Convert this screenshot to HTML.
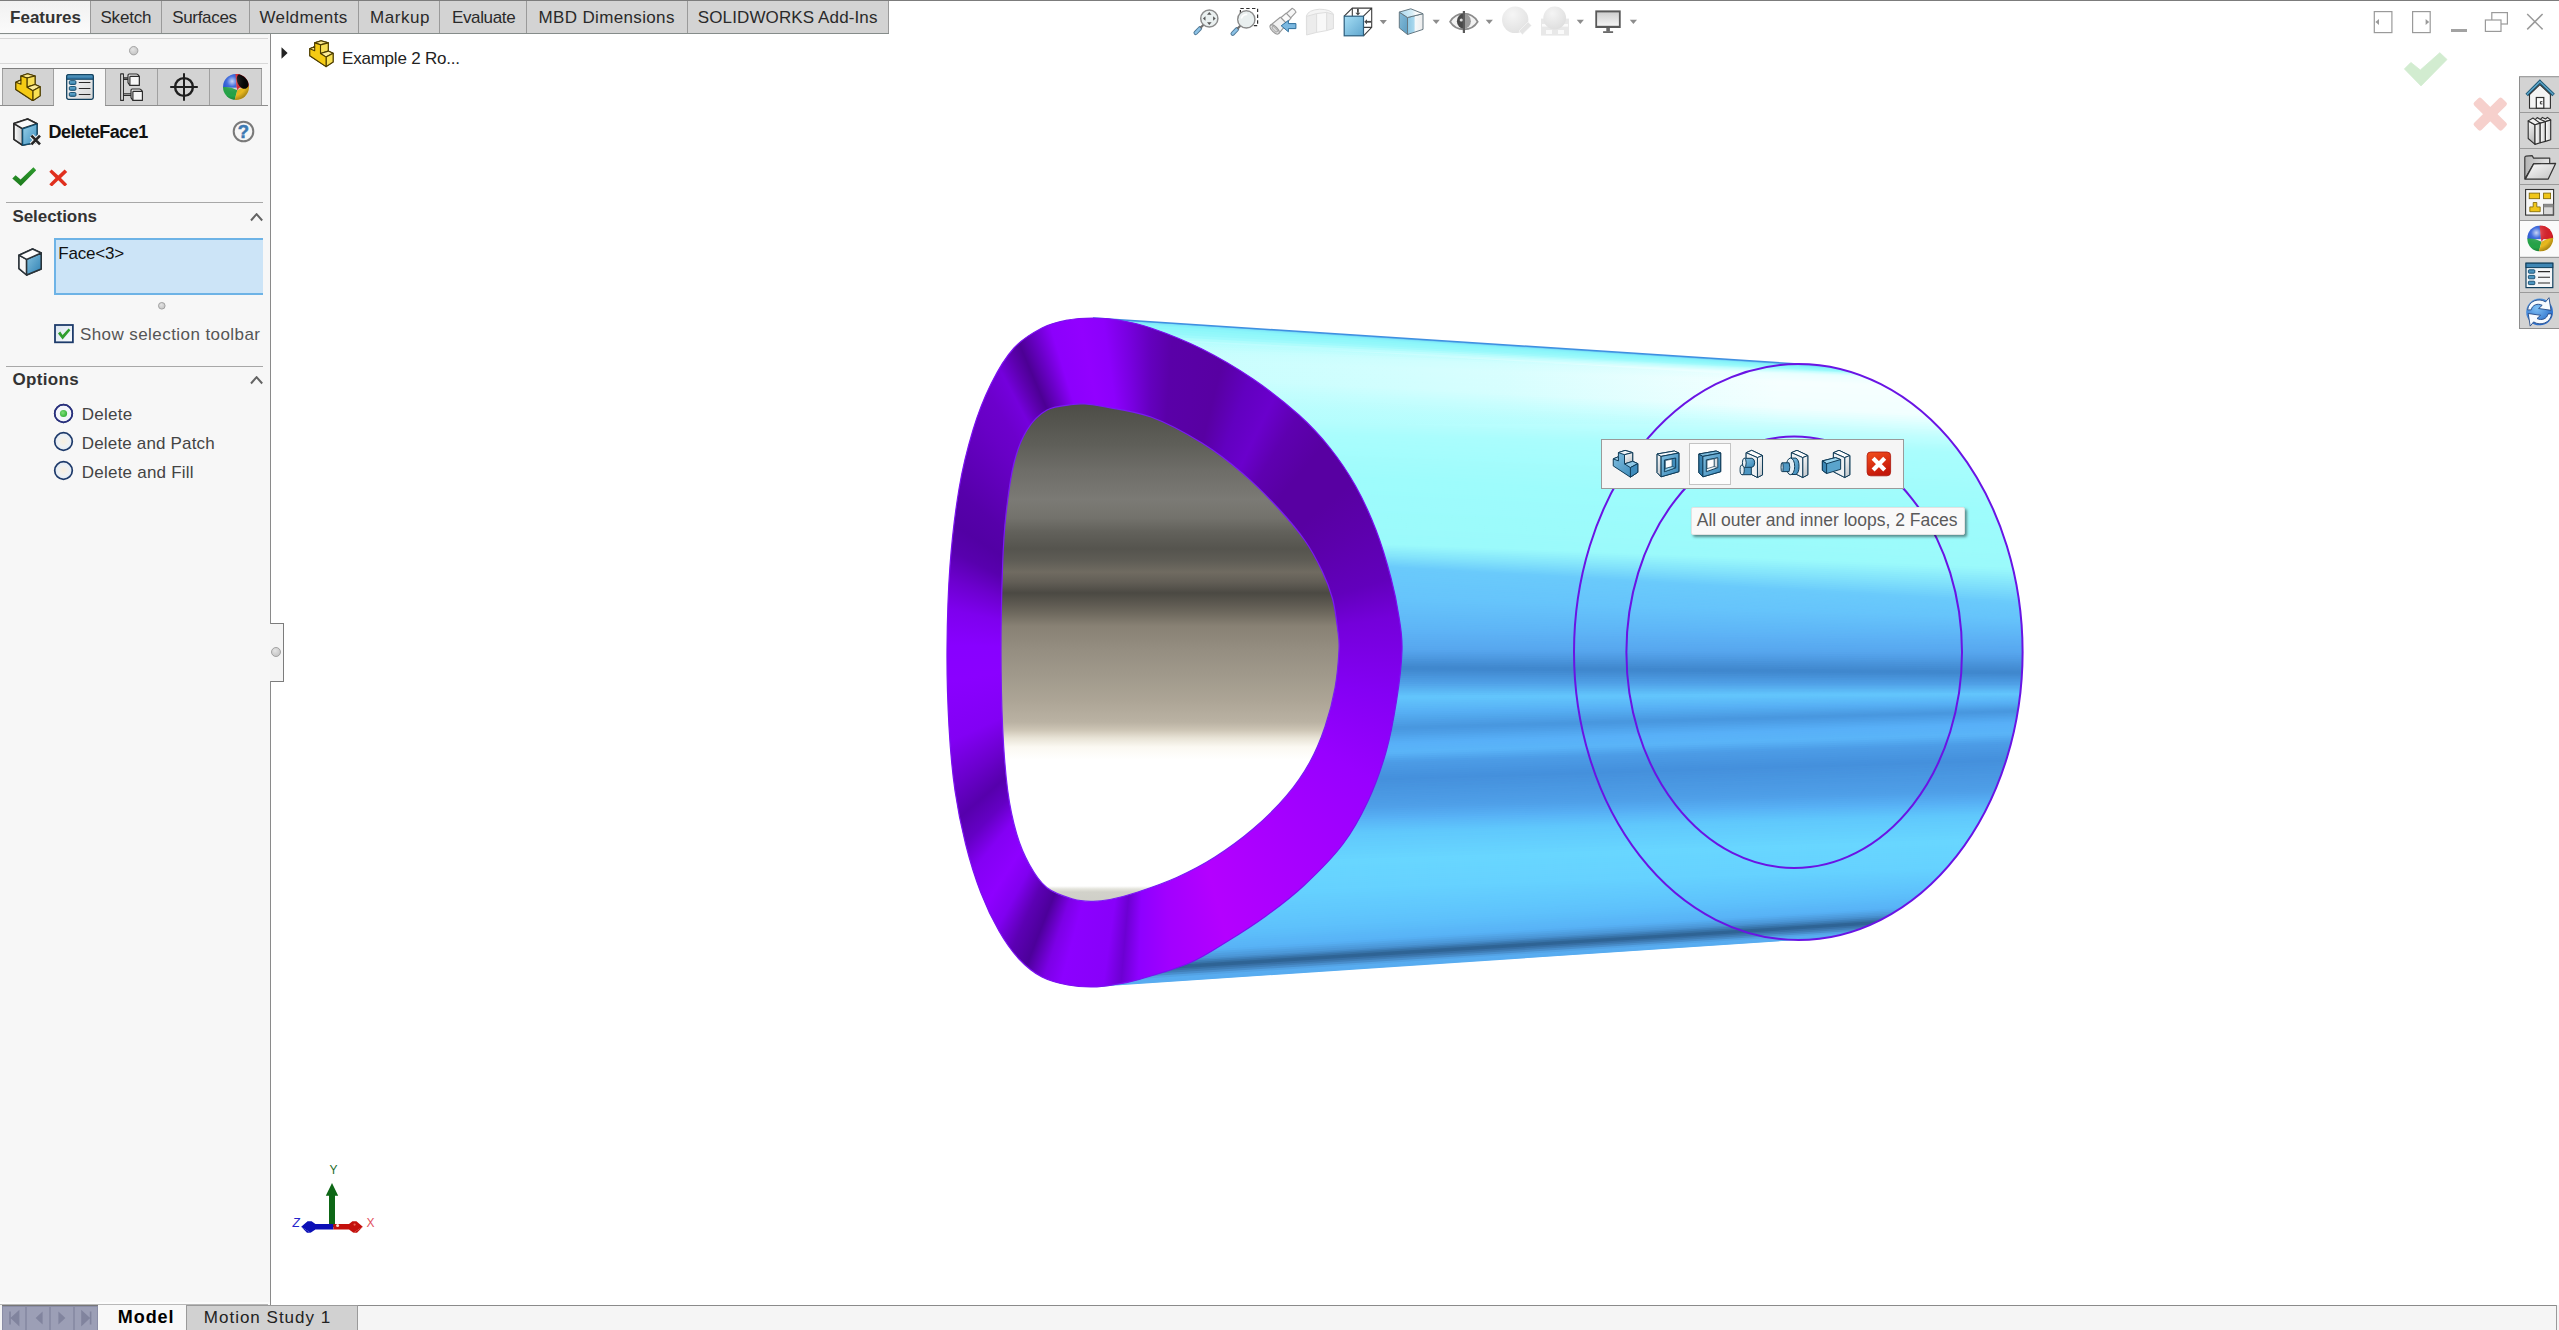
<!DOCTYPE html>
<html><head><meta charset="utf-8"><title>SOLIDWORKS - DeleteFace1</title>
<style>
html,body{margin:0;padding:0;}
body{width:2559px;height:1330px;overflow:hidden;background:#fff;position:relative;font-family:"Liberation Sans",sans-serif;}
.abs{position:absolute;}
.t{position:absolute;white-space:nowrap;line-height:1;font-family:"Liberation Sans",sans-serif;}
.b{position:absolute;box-sizing:border-box;}
</style></head><body>

<svg class="abs" width="2559" height="1330" viewBox="0 0 2559 1330" style="left:0;top:0"><defs><clipPath id="bc"><path d="M1093,318L1798.3,364A224.3,288.0 0 0 1 1798.3,940L1093,987Z"/></clipPath></defs><linearGradient id="hl" gradientUnits="userSpaceOnUse" x1="1093" y1="0" x2="1780" y2="0"><stop offset="0" stop-color="#b4fdfd" stop-opacity="0.75"/><stop offset="0.6" stop-color="#b4fdfd" stop-opacity="0.45"/><stop offset="1" stop-color="#b4fdfd" stop-opacity="0"/></linearGradient><g clip-path="url(#bc)"><path d="M1085,317.4L2030,379.1L2030,381.5L1085,319.8Z" fill="#6acbf4"/>
<path d="M1085,318.6L2030,380.3L2030,382.2L1085,321.2Z" fill="#82eaf8"/>
<path d="M1085,320.0L2030,381.0L2030,382.9L1085,322.6Z" fill="#87f2fa"/>
<path d="M1085,321.4L2030,381.7L2030,382.9L1085,325.4Z" fill="#8cf6fa"/>
<path d="M1085,324.2L2030,381.7L2030,382.9L1085,328.1Z" fill="#91f8fa"/>
<path d="M1085,326.9L2030,381.7L2030,382.8L1085,330.9Z" fill="#96f8fb"/>
<path d="M1085,329.7L2030,381.6L2030,382.8L1085,333.9Z" fill="#9ffafc"/>
<path d="M1085,332.7L2030,381.6L2030,382.6L1085,337.0Z" fill="#aefcfc"/>
<path d="M1085,335.8L2030,381.4L2030,382.6L1085,340.0Z" fill="#bdfdfe"/>
<path d="M1085,338.8L2030,381.4L2030,383.0L1085,342.8Z" fill="#cafefe"/>
<path d="M1085,341.6L2030,381.8L2030,383.4L1085,345.6Z" fill="#d7fefe"/>
<path d="M1085,344.4L2030,382.2L2030,383.8L1085,348.4Z" fill="#e4ffff"/>
<path d="M1085,347.2L2030,382.6L2030,385.3L1085,350.3Z" fill="#ebffff"/>
<path d="M1085,349.1L2030,384.1L2030,386.8L1085,352.3Z" fill="#eeffff"/>
<path d="M1085,351.1L2030,385.6L2030,388.3L1085,354.3Z" fill="#f0ffff"/>
<path d="M1085,353.1L2030,387.1L2030,389.8L1085,356.2Z" fill="#f2ffff"/>
<path d="M1085,355.0L2030,388.6L2030,391.2L1085,358.2Z" fill="#f5ffff"/>
<path d="M1085,357.0L2030,390.1L2030,393.5L1085,359.4Z" fill="#f6ffff"/>
<path d="M1085,358.2L2030,392.3L2030,395.8L1085,360.5Z" fill="#f6ffff"/>
<path d="M1085,359.3L2030,394.6L2030,398.0L1085,361.7Z" fill="#f5ffff"/>
<path d="M1085,360.5L2030,396.8L2030,400.3L1085,362.9Z" fill="#f5ffff"/>
<path d="M1085,361.7L2030,399.1L2030,402.6L1085,364.0Z" fill="#f5ffff"/>
<path d="M1085,362.8L2030,401.4L2030,404.8L1085,365.2Z" fill="#f4ffff"/>
<path d="M1085,364.0L2030,403.6L2030,407.1L1085,366.4Z" fill="#f4ffff"/>
<path d="M1085,365.2L2030,405.9L2030,409.4L1085,367.6Z" fill="#f4ffff"/>
<path d="M1085,366.4L2030,408.2L2030,411.6L1085,368.8Z" fill="#f3ffff"/>
<path d="M1085,367.6L2030,410.4L2030,413.9L1085,369.9Z" fill="#f3ffff"/>
<path d="M1085,368.7L2030,412.7L2030,416.2L1085,371.1Z" fill="#f3ffff"/>
<path d="M1085,369.9L2030,415.0L2030,418.4L1085,372.3Z" fill="#f2ffff"/>
<path d="M1085,371.1L2030,417.2L2030,420.7L1085,373.4Z" fill="#f2ffff"/>
<path d="M1085,372.2L2030,419.5L2030,422.7L1085,375.4Z" fill="#f0ffff"/>
<path d="M1085,374.2L2030,421.5L2030,424.7L1085,377.4Z" fill="#ebffff"/>
<path d="M1085,376.2L2030,423.5L2030,426.7L1085,379.4Z" fill="#e7ffff"/>
<path d="M1085,378.2L2030,425.5L2030,428.7L1085,381.4Z" fill="#e3ffff"/>
<path d="M1085,380.2L2030,427.5L2030,430.7L1085,383.4Z" fill="#deffff"/>
<path d="M1085,382.2L2030,429.5L2030,432.2L1085,385.7Z" fill="#daffff"/>
<path d="M1085,384.5L2030,431.1L2030,433.8L1085,387.9Z" fill="#d6ffff"/>
<path d="M1085,386.7L2030,432.6L2030,435.4L1085,390.1Z" fill="#d3ffff"/>
<path d="M1085,388.9L2030,434.2L2030,436.9L1085,392.4Z" fill="#cffefe"/>
<path d="M1085,391.2L2030,435.7L2030,438.4L1085,394.6Z" fill="#cbfefe"/>
<path d="M1085,393.4L2030,437.2L2030,440.0L1085,396.8Z" fill="#c8fefe"/>
<path d="M1085,395.6L2030,438.8L2030,441.6L1085,399.0Z" fill="#c4fefe"/>
<path d="M1085,397.8L2030,440.4L2030,442.8L1085,401.4Z" fill="#c1fefe"/>
<path d="M1085,400.2L2030,441.6L2030,444.0L1085,403.8Z" fill="#bffefe"/>
<path d="M1085,402.6L2030,442.8L2030,445.2L1085,406.2Z" fill="#bdfefe"/>
<path d="M1085,405.0L2030,444.0L2030,446.4L1085,408.6Z" fill="#bbfefe"/>
<path d="M1085,407.4L2030,445.2L2030,447.6L1085,411.0Z" fill="#b9fefe"/>
<path d="M1085,409.8L2030,446.4L2030,448.8L1085,413.4Z" fill="#b7fefe"/>
<path d="M1085,412.2L2030,447.6L2030,450.0L1085,415.8Z" fill="#b5fdfd"/>
<path d="M1085,414.6L2030,448.8L2030,451.2L1085,418.2Z" fill="#b3fdfd"/>
<path d="M1085,417.0L2030,450.1L2030,452.5L1085,420.6Z" fill="#b1fdfd"/>
<path d="M1085,419.4L2030,451.3L2030,453.7L1085,423.0Z" fill="#affdfd"/>
<path d="M1085,421.8L2030,452.5L2030,454.9L1085,425.4Z" fill="#adfdfd"/>
<path d="M1085,424.2L2030,453.7L2030,456.1L1085,427.8Z" fill="#abfdfd"/>
<path d="M1085,426.6L2030,454.9L2030,458.3L1085,429.2Z" fill="#aafdfd"/>
<path d="M1085,428.0L2030,457.1L2030,460.5L1085,430.6Z" fill="#a9fdfd"/>
<path d="M1085,429.4L2030,459.3L2030,462.6L1085,432.1Z" fill="#a9fdfd"/>
<path d="M1085,430.9L2030,461.4L2030,464.8L1085,433.6Z" fill="#a8fdfd"/>
<path d="M1085,432.4L2030,463.6L2030,467.0L1085,435.0Z" fill="#a8fdfd"/>
<path d="M1085,433.8L2030,465.8L2030,469.2L1085,436.4Z" fill="#a7fdfd"/>
<path d="M1085,435.2L2030,468.0L2030,471.3L1085,437.9Z" fill="#a7fdfd"/>
<path d="M1085,436.7L2030,470.1L2030,473.5L1085,439.4Z" fill="#a7fdfd"/>
<path d="M1085,438.2L2030,472.3L2030,475.7L1085,440.8Z" fill="#a6fdfd"/>
<path d="M1085,439.6L2030,474.5L2030,477.9L1085,442.2Z" fill="#a6fdfd"/>
<path d="M1085,441.0L2030,476.7L2030,480.0L1085,443.7Z" fill="#a5fdfd"/>
<path d="M1085,442.5L2030,478.8L2030,482.2L1085,445.2Z" fill="#a5fdfd"/>
<path d="M1085,444.0L2030,481.0L2030,484.4L1085,446.6Z" fill="#a4fdfd"/>
<path d="M1085,445.4L2030,483.2L2030,486.6L1085,448.0Z" fill="#a4fcfc"/>
<path d="M1085,446.8L2030,485.4L2030,488.8L1085,449.5Z" fill="#a3fcfc"/>
<path d="M1085,448.3L2030,487.6L2030,490.9L1085,451.0Z" fill="#a3fcfc"/>
<path d="M1085,449.8L2030,489.7L2030,493.1L1085,452.4Z" fill="#a2fcfc"/>
<path d="M1085,451.2L2030,491.9L2030,495.3L1085,453.8Z" fill="#a2fcfc"/>
<path d="M1085,452.6L2030,494.1L2030,497.5L1085,455.3Z" fill="#a1fcfc"/>
<path d="M1085,454.1L2030,496.3L2030,499.6L1085,456.8Z" fill="#a1fcfc"/>
<path d="M1085,455.6L2030,498.4L2030,501.8L1085,458.2Z" fill="#a1fcfc"/>
<path d="M1085,457.0L2030,500.6L2030,504.0L1085,459.6Z" fill="#a0fcfc"/>
<path d="M1085,458.4L2030,502.8L2030,506.2L1085,461.1Z" fill="#a0fcfc"/>
<path d="M1085,459.9L2030,505.0L2030,508.3L1085,462.6Z" fill="#9ffcfc"/>
<path d="M1085,461.4L2030,507.1L2030,510.5L1085,464.0Z" fill="#9ffcfc"/>
<path d="M1085,462.8L2030,509.3L2030,512.7L1085,465.4Z" fill="#9efcfc"/>
<path d="M1085,464.2L2030,511.5L2030,514.4L1085,467.5Z" fill="#9efcfc"/>
<path d="M1085,466.3L2030,513.2L2030,516.2L1085,469.6Z" fill="#9efcfc"/>
<path d="M1085,468.4L2030,515.0L2030,517.9L1085,471.7Z" fill="#9efcfc"/>
<path d="M1085,470.5L2030,516.7L2030,519.6L1085,473.8Z" fill="#9efcfc"/>
<path d="M1085,472.6L2030,518.4L2030,521.4L1085,475.9Z" fill="#9efcfc"/>
<path d="M1085,474.7L2030,520.2L2030,523.1L1085,478.0Z" fill="#9efcfc"/>
<path d="M1085,476.8L2030,521.9L2030,524.8L1085,480.1Z" fill="#9dfcfc"/>
<path d="M1085,478.9L2030,523.6L2030,526.5L1085,482.2Z" fill="#9dfcfc"/>
<path d="M1085,481.0L2030,525.3L2030,528.3L1085,484.3Z" fill="#9dfbfc"/>
<path d="M1085,483.1L2030,527.1L2030,530.0L1085,486.3Z" fill="#9dfbfc"/>
<path d="M1085,485.1L2030,528.8L2030,531.7L1085,488.4Z" fill="#9dfbfc"/>
<path d="M1085,487.2L2030,530.5L2030,533.5L1085,490.5Z" fill="#9dfbfc"/>
<path d="M1085,489.3L2030,532.3L2030,535.2L1085,492.6Z" fill="#9dfbfc"/>
<path d="M1085,491.4L2030,534.0L2030,536.9L1085,494.7Z" fill="#9dfbfc"/>
<path d="M1085,493.5L2030,535.7L2030,538.7L1085,496.8Z" fill="#9dfbfc"/>
<path d="M1085,495.6L2030,537.5L2030,540.4L1085,498.9Z" fill="#9dfbfc"/>
<path d="M1085,497.7L2030,539.2L2030,542.1L1085,501.0Z" fill="#9cfbfc"/>
<path d="M1085,499.8L2030,540.9L2030,543.9L1085,503.1Z" fill="#9cfbfb"/>
<path d="M1085,501.9L2030,542.7L2030,545.6L1085,505.1Z" fill="#9cfbfb"/>
<path d="M1085,503.9L2030,544.4L2030,547.3L1085,507.2Z" fill="#9cfbfb"/>
<path d="M1085,506.0L2030,546.1L2030,549.1L1085,509.3Z" fill="#9cfbfb"/>
<path d="M1085,508.1L2030,547.9L2030,550.8L1085,511.4Z" fill="#9cfbfb"/>
<path d="M1085,510.2L2030,549.6L2030,552.5L1085,513.5Z" fill="#9cfbfb"/>
<path d="M1085,512.3L2030,551.3L2030,554.2L1085,515.6Z" fill="#9cfbfb"/>
<path d="M1085,514.4L2030,553.0L2030,556.0L1085,517.7Z" fill="#9cfbfb"/>
<path d="M1085,516.5L2030,554.8L2030,557.7L1085,519.8Z" fill="#9cfafb"/>
<path d="M1085,518.6L2030,556.5L2030,559.4L1085,521.9Z" fill="#9cfafb"/>
<path d="M1085,520.7L2030,558.2L2030,561.2L1085,523.9Z" fill="#9cfafb"/>
<path d="M1085,522.7L2030,560.0L2030,562.9L1085,526.0Z" fill="#9bfafb"/>
<path d="M1085,524.8L2030,561.7L2030,564.6L1085,528.1Z" fill="#9bfafb"/>
<path d="M1085,526.9L2030,563.4L2030,566.4L1085,530.2Z" fill="#9bfafb"/>
<path d="M1085,529.0L2030,565.2L2030,568.1L1085,532.3Z" fill="#9bfafb"/>
<path d="M1085,531.1L2030,566.9L2030,569.8L1085,534.4Z" fill="#9bfafb"/>
<path d="M1085,533.2L2030,568.6L2030,572.1L1085,535.6Z" fill="#99f8fb"/>
<path d="M1085,534.4L2030,570.9L2030,574.3L1085,536.9Z" fill="#96f5fb"/>
<path d="M1085,535.7L2030,573.1L2030,576.6L1085,538.1Z" fill="#93f2fb"/>
<path d="M1085,536.9L2030,575.4L2030,578.8L1085,539.3Z" fill="#90effb"/>
<path d="M1085,538.1L2030,577.6L2030,581.1L1085,540.6Z" fill="#8cecfb"/>
<path d="M1085,539.4L2030,579.9L2030,583.3L1085,541.8Z" fill="#89e9fb"/>
<path d="M1085,540.6L2030,582.1L2030,585.6L1085,543.0Z" fill="#86e6fb"/>
<path d="M1085,541.8L2030,584.4L2030,587.8L1085,543.9Z" fill="#83e3fb"/>
<path d="M1085,542.7L2030,586.6L2030,590.0L1085,544.8Z" fill="#80e0fb"/>
<path d="M1085,543.6L2030,588.8L2030,592.2L1085,545.7Z" fill="#7dddfb"/>
<path d="M1085,544.5L2030,591.0L2030,594.4L1085,546.6Z" fill="#7adafb"/>
<path d="M1085,545.4L2030,593.2L2030,596.6L1085,547.5Z" fill="#77d7fb"/>
<path d="M1085,546.3L2030,595.4L2030,598.8L1085,548.4Z" fill="#74d4fb"/>
<path d="M1085,547.2L2030,597.6L2030,601.0L1085,549.3Z" fill="#71d1fb"/>
<path d="M1085,548.1L2030,599.8L2030,603.2L1085,550.2Z" fill="#6ecefb"/>
<path d="M1085,549.0L2030,602.0L2030,605.4L1085,551.1Z" fill="#6bcbfb"/>
<path d="M1085,549.9L2030,604.2L2030,606.3L1085,553.6Z" fill="#6acafb"/>
<path d="M1085,552.4L2030,605.1L2030,607.3L1085,556.2Z" fill="#6ac9fb"/>
<path d="M1085,555.0L2030,606.1L2030,608.2L1085,558.7Z" fill="#69c9fb"/>
<path d="M1085,557.5L2030,607.0L2030,609.1L1085,561.3Z" fill="#69c9fb"/>
<path d="M1085,560.1L2030,607.9L2030,610.0L1085,563.8Z" fill="#69c8fb"/>
<path d="M1085,562.6L2030,608.8L2030,610.9L1085,566.3Z" fill="#69c8fb"/>
<path d="M1085,565.1L2030,609.7L2030,611.8L1085,568.9Z" fill="#68c8fb"/>
<path d="M1085,567.7L2030,610.6L2030,612.8L1085,571.4Z" fill="#68c7fb"/>
<path d="M1085,570.2L2030,611.6L2030,613.7L1085,574.0Z" fill="#68c7fb"/>
<path d="M1085,572.8L2030,612.5L2030,614.6L1085,576.5Z" fill="#68c6fb"/>
<path d="M1085,575.3L2030,613.4L2030,615.5L1085,579.0Z" fill="#67c6fb"/>
<path d="M1085,577.8L2030,614.3L2030,616.4L1085,581.6Z" fill="#67c6fb"/>
<path d="M1085,580.4L2030,615.2L2030,617.3L1085,584.1Z" fill="#67c5fb"/>
<path d="M1085,582.9L2030,616.1L2030,618.3L1085,586.7Z" fill="#67c5fb"/>
<path d="M1085,585.5L2030,617.1L2030,619.2L1085,589.2Z" fill="#66c5fb"/>
<path d="M1085,588.0L2030,618.0L2030,620.1L1085,591.8Z" fill="#66c4fb"/>
<path d="M1085,590.5L2030,618.9L2030,621.3L1085,594.2Z" fill="#66c3fb"/>
<path d="M1085,593.0L2030,620.1L2030,622.4L1085,596.6Z" fill="#65c2fa"/>
<path d="M1085,595.4L2030,621.2L2030,623.6L1085,599.0Z" fill="#65c1fa"/>
<path d="M1085,597.8L2030,622.4L2030,624.7L1085,601.4Z" fill="#64c0fa"/>
<path d="M1085,600.2L2030,623.5L2030,625.9L1085,603.9Z" fill="#64bffa"/>
<path d="M1085,602.6L2030,624.7L2030,627.1L1085,606.3Z" fill="#63bef9"/>
<path d="M1085,605.1L2030,625.9L2030,628.2L1085,608.7Z" fill="#63bdf9"/>
<path d="M1085,607.5L2030,627.0L2030,629.4L1085,611.1Z" fill="#62bcf8"/>
<path d="M1085,609.9L2030,628.2L2030,630.5L1085,613.5Z" fill="#61bbf8"/>
<path d="M1085,612.3L2030,629.3L2030,631.7L1085,616.0Z" fill="#61baf8"/>
<path d="M1085,614.8L2030,630.5L2030,632.9L1085,618.4Z" fill="#60b9f8"/>
<path d="M1085,617.2L2030,631.7L2030,634.0L1085,620.8Z" fill="#60b8f7"/>
<path d="M1085,619.6L2030,632.8L2030,635.2L1085,623.2Z" fill="#5fb7f7"/>
<path d="M1085,622.0L2030,634.0L2030,636.3L1085,625.6Z" fill="#5fb6f6"/>
<path d="M1085,624.4L2030,635.1L2030,637.5L1085,628.1Z" fill="#5eb5f6"/>
<path d="M1085,626.9L2030,636.3L2030,639.2L1085,630.2Z" fill="#5eb3f6"/>
<path d="M1085,629.0L2030,638.0L2030,640.9L1085,632.4Z" fill="#5db2f5"/>
<path d="M1085,631.2L2030,639.7L2030,642.6L1085,634.5Z" fill="#5cb0f4"/>
<path d="M1085,633.3L2030,641.4L2030,644.2L1085,636.7Z" fill="#5caff3"/>
<path d="M1085,635.5L2030,643.0L2030,645.9L1085,638.8Z" fill="#5baef2"/>
<path d="M1085,637.6L2030,644.7L2030,647.6L1085,641.0Z" fill="#5aacf2"/>
<path d="M1085,639.8L2030,646.4L2030,649.3L1085,643.2Z" fill="#59abf1"/>
<path d="M1085,642.0L2030,648.1L2030,651.0L1085,645.3Z" fill="#59aaf0"/>
<path d="M1085,644.1L2030,649.8L2030,652.7L1085,647.5Z" fill="#58a8ef"/>
<path d="M1085,646.3L2030,651.5L2030,654.4L1085,649.6Z" fill="#57a7ee"/>
<path d="M1085,648.4L2030,653.1L2030,656.3L1085,651.3Z" fill="#56a4ec"/>
<path d="M1085,650.1L2030,655.1L2030,658.3L1085,653.1Z" fill="#53a1e9"/>
<path d="M1085,651.9L2030,657.1L2030,660.2L1085,654.8Z" fill="#519ee6"/>
<path d="M1085,653.6L2030,659.0L2030,662.2L1085,656.5Z" fill="#4f9be2"/>
<path d="M1085,655.3L2030,661.0L2030,664.1L1085,658.2Z" fill="#4c98df"/>
<path d="M1085,657.0L2030,662.9L2030,666.1L1085,660.0Z" fill="#4a94db"/>
<path d="M1085,658.8L2030,664.9L2030,668.1L1085,661.7Z" fill="#4791d8"/>
<path d="M1085,660.5L2030,666.9L2030,670.0L1085,663.4Z" fill="#458ed4"/>
<path d="M1085,662.2L2030,668.8L2030,672.0L1085,665.1Z" fill="#438bd1"/>
<path d="M1085,663.9L2030,670.8L2030,673.9L1085,666.8Z" fill="#4088ce"/>
<path d="M1085,665.6L2030,672.7L2030,675.5L1085,669.1Z" fill="#4088ce"/>
<path d="M1085,667.9L2030,674.3L2030,677.0L1085,671.3Z" fill="#428bd2"/>
<path d="M1085,670.1L2030,675.8L2030,678.6L1085,673.5Z" fill="#458fd5"/>
<path d="M1085,672.3L2030,677.4L2030,680.1L1085,675.7Z" fill="#4792d9"/>
<path d="M1085,674.5L2030,678.9L2030,681.7L1085,678.0Z" fill="#4996dd"/>
<path d="M1085,676.8L2030,680.5L2030,683.2L1085,680.2Z" fill="#4c9ae0"/>
<path d="M1085,679.0L2030,682.0L2030,684.8L1085,682.4Z" fill="#4e9de4"/>
<path d="M1085,681.2L2030,683.6L2030,686.1L1085,684.6Z" fill="#50a1e7"/>
<path d="M1085,683.4L2030,684.9L2030,687.3L1085,686.8Z" fill="#53a6ea"/>
<path d="M1085,685.6L2030,686.1L2030,688.6L1085,688.9Z" fill="#55abed"/>
<path d="M1085,687.7L2030,687.4L2030,689.9L1085,691.1Z" fill="#58b0f0"/>
<path d="M1085,689.9L2030,688.7L2030,691.2L1085,693.3Z" fill="#5ab5f3"/>
<path d="M1085,692.1L2030,690.0L2030,692.5L1085,695.4Z" fill="#5dbaf6"/>
<path d="M1085,694.2L2030,691.3L2030,693.8L1085,697.6Z" fill="#5fbff9"/>
<path d="M1085,696.4L2030,692.6L2030,695.1L1085,699.8Z" fill="#62c4fc"/>
<path d="M1085,698.6L2030,693.9L2030,696.1L1085,702.0Z" fill="#62c5fc"/>
<path d="M1085,700.8L2030,694.9L2030,697.2L1085,704.3Z" fill="#61c2fb"/>
<path d="M1085,703.1L2030,696.0L2030,698.3L1085,706.6Z" fill="#5fbffa"/>
<path d="M1085,705.4L2030,697.1L2030,699.4L1085,708.9Z" fill="#5ebcf9"/>
<path d="M1085,707.6L2030,698.2L2030,700.5L1085,711.1Z" fill="#5cbaf8"/>
<path d="M1085,709.9L2030,699.3L2030,701.6L1085,713.4Z" fill="#5bb7f7"/>
<path d="M1085,712.2L2030,700.4L2030,702.7L1085,715.7Z" fill="#59b4f6"/>
<path d="M1085,714.5L2030,701.5L2030,703.8L1085,717.9Z" fill="#58b1f5"/>
<path d="M1085,716.7L2030,702.5L2030,704.8L1085,720.4Z" fill="#56aef3"/>
<path d="M1085,719.2L2030,703.6L2030,705.8L1085,722.9Z" fill="#54abf0"/>
<path d="M1085,721.7L2030,704.6L2030,706.8L1085,725.4Z" fill="#52a8ed"/>
<path d="M1085,724.2L2030,705.6L2030,707.8L1085,727.9Z" fill="#50a5ea"/>
<path d="M1085,726.7L2030,706.6L2030,708.8L1085,730.4Z" fill="#4fa1e8"/>
<path d="M1085,729.2L2030,707.6L2030,709.8L1085,732.9Z" fill="#4d9ee5"/>
<path d="M1085,731.7L2030,708.6L2030,710.9L1085,735.4Z" fill="#4b9be2"/>
<path d="M1085,734.2L2030,709.7L2030,711.9L1085,737.9Z" fill="#4998df"/>
<path d="M1085,736.7L2030,710.7L2030,713.4L1085,739.9Z" fill="#4998e0"/>
<path d="M1085,738.7L2030,712.2L2030,714.8L1085,742.0Z" fill="#4b9be3"/>
<path d="M1085,740.8L2030,713.6L2030,716.3L1085,744.1Z" fill="#4d9ee6"/>
<path d="M1085,742.9L2030,715.1L2030,717.8L1085,746.2Z" fill="#4fa1e9"/>
<path d="M1085,745.0L2030,716.6L2030,719.3L1085,748.2Z" fill="#51a5ed"/>
<path d="M1085,747.0L2030,718.1L2030,720.8L1085,750.3Z" fill="#53a8f0"/>
<path d="M1085,749.1L2030,719.6L2030,722.2L1085,752.4Z" fill="#55abf3"/>
<path d="M1085,751.2L2030,721.0L2030,723.7L1085,754.4Z" fill="#57aef6"/>
<path d="M1085,753.2L2030,722.5L2030,725.8L1085,756.1Z" fill="#58b0f8"/>
<path d="M1085,754.9L2030,724.6L2030,728.0L1085,757.7Z" fill="#59b1f8"/>
<path d="M1085,756.5L2030,726.8L2030,730.1L1085,759.4Z" fill="#59b2f8"/>
<path d="M1085,758.2L2030,728.9L2030,732.2L1085,761.0Z" fill="#59b3f8"/>
<path d="M1085,759.8L2030,731.0L2030,734.3L1085,762.7Z" fill="#5ab4f8"/>
<path d="M1085,761.5L2030,733.1L2030,736.3L1085,764.7Z" fill="#59b2f6"/>
<path d="M1085,763.5L2030,735.1L2030,738.3L1085,766.7Z" fill="#56adf3"/>
<path d="M1085,765.5L2030,737.1L2030,740.3L1085,768.7Z" fill="#53a8ef"/>
<path d="M1085,767.5L2030,739.1L2030,742.3L1085,770.7Z" fill="#50a3eb"/>
<path d="M1085,769.5L2030,741.1L2030,744.3L1085,772.7Z" fill="#4d9ee8"/>
<path d="M1085,771.5L2030,743.1L2030,746.3L1085,774.7Z" fill="#4c9be5"/>
<path d="M1085,773.5L2030,745.1L2030,748.3L1085,776.7Z" fill="#4b9ae4"/>
<path d="M1085,775.5L2030,747.1L2030,750.3L1085,778.7Z" fill="#4a98e3"/>
<path d="M1085,777.5L2030,749.1L2030,752.3L1085,780.7Z" fill="#4997e2"/>
<path d="M1085,779.5L2030,751.1L2030,754.3L1085,782.7Z" fill="#4895e0"/>
<path d="M1085,781.5L2030,753.1L2030,756.3L1085,784.7Z" fill="#4794df"/>
<path d="M1085,783.5L2030,755.1L2030,758.3L1085,786.7Z" fill="#4692de"/>
<path d="M1085,785.5L2030,757.1L2030,760.3L1085,788.7Z" fill="#4591dd"/>
<path d="M1085,787.5L2030,759.1L2030,762.2L1085,790.3Z" fill="#4590dc"/>
<path d="M1085,789.1L2030,761.0L2030,764.2L1085,792.0Z" fill="#4692dd"/>
<path d="M1085,790.8L2030,763.0L2030,766.1L1085,793.6Z" fill="#4792de"/>
<path d="M1085,792.4L2030,764.9L2030,768.1L1085,795.3Z" fill="#4794df"/>
<path d="M1085,794.1L2030,766.9L2030,770.0L1085,796.9Z" fill="#4894df"/>
<path d="M1085,795.7L2030,768.8L2030,772.0L1085,798.6Z" fill="#4896e0"/>
<path d="M1085,797.4L2030,770.8L2030,773.9L1085,800.2Z" fill="#4996e1"/>
<path d="M1085,799.0L2030,772.7L2030,775.9L1085,801.9Z" fill="#4a98e2"/>
<path d="M1085,800.7L2030,774.7L2030,777.8L1085,803.5Z" fill="#4a98e2"/>
<path d="M1085,802.3L2030,776.6L2030,779.8L1085,805.2Z" fill="#4b99e3"/>
<path d="M1085,804.0L2030,778.6L2030,781.7L1085,806.8Z" fill="#4c9ae4"/>
<path d="M1085,805.6L2030,780.5L2030,783.7L1085,808.5Z" fill="#4c9be5"/>
<path d="M1085,807.3L2030,782.5L2030,785.6L1085,810.1Z" fill="#4d9ce5"/>
<path d="M1085,808.9L2030,784.4L2030,787.6L1085,811.8Z" fill="#4d9de6"/>
<path d="M1085,810.6L2030,786.4L2030,789.5L1085,813.4Z" fill="#4e9ee7"/>
<path d="M1085,812.2L2030,788.3L2030,791.5L1085,815.1Z" fill="#4f9fe8"/>
<path d="M1085,813.9L2030,790.2L2030,793.5L1085,817.1Z" fill="#50a1e9"/>
<path d="M1085,815.9L2030,792.2L2030,795.5L1085,819.1Z" fill="#51a4ec"/>
<path d="M1085,817.9L2030,794.2L2030,797.5L1085,821.1Z" fill="#53a7ee"/>
<path d="M1085,819.9L2030,796.2L2030,799.5L1085,823.1Z" fill="#54aaf0"/>
<path d="M1085,821.9L2030,798.2L2030,801.5L1085,825.1Z" fill="#56adf2"/>
<path d="M1085,823.9L2030,800.2L2030,803.5L1085,827.1Z" fill="#57b0f5"/>
<path d="M1085,825.9L2030,802.2L2030,805.1L1085,829.0Z" fill="#59b4f6"/>
<path d="M1085,827.8L2030,803.9L2030,806.7L1085,831.0Z" fill="#5ab7f7"/>
<path d="M1085,829.8L2030,805.5L2030,808.3L1085,833.0Z" fill="#5bbaf8"/>
<path d="M1085,831.8L2030,807.1L2030,810.0L1085,835.0Z" fill="#5cbdf9"/>
<path d="M1085,833.8L2030,808.8L2030,811.6L1085,836.9Z" fill="#5dc0fa"/>
<path d="M1085,835.7L2030,810.4L2030,813.2L1085,838.9Z" fill="#5ec3fb"/>
<path d="M1085,837.7L2030,812.0L2030,814.9L1085,840.9Z" fill="#5fc6fc"/>
<path d="M1085,839.7L2030,813.7L2030,816.7L1085,843.0Z" fill="#60c8fc"/>
<path d="M1085,841.8L2030,815.5L2030,818.4L1085,845.1Z" fill="#61cafc"/>
<path d="M1085,843.9L2030,817.2L2030,820.2L1085,847.2Z" fill="#61cafd"/>
<path d="M1085,846.0L2030,819.0L2030,822.0L1085,849.3Z" fill="#62ccfd"/>
<path d="M1085,848.1L2030,820.8L2030,823.8L1085,851.4Z" fill="#63ccfd"/>
<path d="M1085,850.2L2030,822.6L2030,825.5L1085,853.5Z" fill="#63cefd"/>
<path d="M1085,852.3L2030,824.3L2030,827.3L1085,855.7Z" fill="#64cefd"/>
<path d="M1085,854.5L2030,826.1L2030,829.1L1085,857.8Z" fill="#64d0fe"/>
<path d="M1085,856.6L2030,827.9L2030,830.9L1085,859.9Z" fill="#65d0fe"/>
<path d="M1085,858.7L2030,829.6L2030,832.6L1085,862.0Z" fill="#65d2fe"/>
<path d="M1085,860.8L2030,831.4L2030,834.4L1085,864.1Z" fill="#66d2fe"/>
<path d="M1085,862.9L2030,833.2L2030,836.2L1085,866.2Z" fill="#67d4fe"/>
<path d="M1085,865.0L2030,835.0L2030,838.0L1085,868.3Z" fill="#67d4ff"/>
<path d="M1085,867.1L2030,836.8L2030,839.7L1085,870.4Z" fill="#68d6ff"/>
<path d="M1085,869.2L2030,838.5L2030,841.7L1085,872.4Z" fill="#68d6ff"/>
<path d="M1085,871.2L2030,840.5L2030,843.7L1085,874.4Z" fill="#68d6ff"/>
<path d="M1085,873.2L2030,842.5L2030,845.7L1085,876.4Z" fill="#68d5ff"/>
<path d="M1085,875.2L2030,844.5L2030,847.7L1085,878.4Z" fill="#67d5ff"/>
<path d="M1085,877.2L2030,846.5L2030,849.7L1085,880.4Z" fill="#67d5ff"/>
<path d="M1085,879.2L2030,848.5L2030,851.7L1085,882.4Z" fill="#67d4ff"/>
<path d="M1085,881.2L2030,850.5L2030,853.7L1085,884.4Z" fill="#67d4ff"/>
<path d="M1085,883.2L2030,852.5L2030,855.7L1085,886.4Z" fill="#67d4ff"/>
<path d="M1085,885.2L2030,854.5L2030,857.7L1085,888.4Z" fill="#67d3ff"/>
<path d="M1085,887.2L2030,856.5L2030,859.7L1085,890.4Z" fill="#67d3ff"/>
<path d="M1085,889.2L2030,858.5L2030,861.7L1085,892.4Z" fill="#66d3ff"/>
<path d="M1085,891.2L2030,860.5L2030,863.7L1085,894.4Z" fill="#66d2ff"/>
<path d="M1085,893.2L2030,862.5L2030,865.7L1085,896.4Z" fill="#66d2ff"/>
<path d="M1085,895.2L2030,864.5L2030,866.9L1085,898.8Z" fill="#66d2ff"/>
<path d="M1085,897.6L2030,865.7L2030,868.0L1085,901.1Z" fill="#65d1ff"/>
<path d="M1085,899.9L2030,866.8L2030,869.2L1085,903.5Z" fill="#65d0ff"/>
<path d="M1085,902.3L2030,868.0L2030,870.4L1085,905.8Z" fill="#64cffe"/>
<path d="M1085,904.6L2030,869.2L2030,871.5L1085,908.1Z" fill="#64cefe"/>
<path d="M1085,906.9L2030,870.3L2030,872.7L1085,910.5Z" fill="#64cdfe"/>
<path d="M1085,909.3L2030,871.5L2030,873.8L1085,912.8Z" fill="#63ccfe"/>
<path d="M1085,911.6L2030,872.6L2030,875.0L1085,915.1Z" fill="#63cbfe"/>
<path d="M1085,913.9L2030,873.8L2030,876.1L1085,917.5Z" fill="#62cafe"/>
<path d="M1085,916.3L2030,874.9L2030,877.3L1085,919.8Z" fill="#62cafd"/>
<path d="M1085,918.6L2030,876.1L2030,878.5L1085,922.2Z" fill="#61c9fd"/>
<path d="M1085,921.0L2030,877.3L2030,879.6L1085,924.5Z" fill="#61c8fd"/>
<path d="M1085,923.3L2030,878.4L2030,880.8L1085,926.8Z" fill="#60c7fd"/>
<path d="M1085,925.6L2030,879.6L2030,881.9L1085,929.2Z" fill="#60c6fd"/>
<path d="M1085,928.0L2030,880.7L2030,883.1L1085,931.5Z" fill="#60c5fd"/>
<path d="M1085,930.3L2030,881.9L2030,884.2L1085,933.8Z" fill="#5fc4fc"/>
<path d="M1085,932.6L2030,883.0L2030,885.4L1085,936.2Z" fill="#5fc3fc"/>
<path d="M1085,935.0L2030,884.2L2030,886.6L1085,938.5Z" fill="#5ec2fc"/>
<path d="M1085,937.3L2030,885.4L2030,888.2L1085,940.7Z" fill="#5ec1fc"/>
<path d="M1085,939.5L2030,887.0L2030,889.9L1085,942.9Z" fill="#5dbffb"/>
<path d="M1085,941.7L2030,888.6L2030,891.5L1085,945.1Z" fill="#5cbefa"/>
<path d="M1085,943.9L2030,890.3L2030,893.1L1085,947.2Z" fill="#5cbcfa"/>
<path d="M1085,946.0L2030,891.9L2030,894.8L1085,949.4Z" fill="#5bbaf9"/>
<path d="M1085,948.2L2030,893.6L2030,896.5L1085,951.6Z" fill="#5ab8f8"/>
<path d="M1085,950.4L2030,895.2L2030,898.1L1085,953.8Z" fill="#5ab6f8"/>
<path d="M1085,952.5L2030,896.9L2030,899.8L1085,955.9Z" fill="#59b5f7"/>
<path d="M1085,954.7L2030,898.5L2030,901.4L1085,958.1Z" fill="#58b3f6"/>
<path d="M1085,956.9L2030,900.2L2030,903.0L1085,960.3Z" fill="#56aef2"/>
<path d="M1085,959.1L2030,901.8L2030,904.6L1085,962.5Z" fill="#53a7e9"/>
<path d="M1085,961.3L2030,903.4L2030,906.2L1085,964.7Z" fill="#4f9fe1"/>
<path d="M1085,963.5L2030,905.0L2030,907.8L1085,966.9Z" fill="#4c98d8"/>
<path d="M1085,965.7L2030,906.6L2030,909.5L1085,968.5Z" fill="#468dcb"/>
<path d="M1085,967.3L2030,908.2L2030,911.1L1085,970.1Z" fill="#3e7fb9"/>
<path d="M1085,968.9L2030,909.9L2030,912.7L1085,971.8Z" fill="#3772a7"/>
<path d="M1085,970.6L2030,911.5L2030,914.3L1085,973.4Z" fill="#2f6495"/>
<path d="M1085,972.2L2030,913.1L2030,915.9L1085,975.4Z" fill="#2f6495"/>
<path d="M1085,974.2L2030,914.7L2030,917.5L1085,977.3Z" fill="#3870a6"/>
<path d="M1085,976.1L2030,916.3L2030,919.0L1085,979.3Z" fill="#407eb7"/>
<path d="M1085,978.1L2030,917.8L2030,920.6L1085,981.5Z" fill="#498ecc"/>
<path d="M1085,980.3L2030,919.4L2030,922.2L1085,983.7Z" fill="#53a2e4"/>
<path d="M1085,982.5L2030,921.0L2030,923.4L1085,985.4Z" fill="#58acf0"/>
<path d="M1085,984.2L2030,922.2L2030,924.5L1085,987.0Z" fill="#58acf0"/>
<path d="M1085,985.8L2030,923.3L2030,925.6L1085,988.7Z" fill="#58acf0"/></g><path d="M1093,336L1800,378L1800,424L1093,424Z" fill="url(#hl)" clip-path="url(#bc)"/><path d="M1093,318L1798.3,364" stroke="#3f8fe0" stroke-width="1.5" fill="none"/></svg>
<div class="abs" style="left:0;top:0;width:2559px;height:1330px;background:conic-gradient(from 0deg at 1150px 652px,#6400be 0deg,#5a00a8 4deg,#5800a2 14deg,#6200c0 20deg,#6a00cc 26deg,#5e00b0 32deg,#5800a2 40deg,#5800a2 50deg,#5c00ac 60deg,#6200bc 73deg,#7400da 82deg,#8400f4 100deg,#9800ff 120deg,#aa00ff 150deg,#b400ff 165deg,#a200ff 176deg,#8e00ff 182deg,#6c00d2 185deg,#8800fa 188deg,#8c00ff 195deg,#7c00e6 198deg,#4c009a 201.5deg,#5c00b4 205deg,#8000f0 209deg,#8e00ff 213deg,#8400f4 219deg,#6400c4 224deg,#5600ac 229deg,#6a00cc 236deg,#8200f4 246deg,#8a00ff 262deg,#8800ff 272deg,#7e00ee 282deg,#6c00ce 290deg,#5800ae 297deg,#5200a4 303deg,#5600aa 310deg,#6000ba 318deg,#6800c6 324deg,#6c00cc 328deg,#7400dc 332deg,#5c00ae 335deg,#4c0094 337deg,#6a00c8 340deg,#8c00fc 343deg,#9200ff 348deg,#8c00fc 352deg,#7800e0 356deg,#6400be 360deg);clip-path:path('M1093.0,318.0C1101.3,318.0 1108.3,318.3 1118.0,320.0C1127.7,321.7 1137.0,323.2 1151.0,328.0C1165.0,332.8 1185.0,340.5 1202.0,349.0C1219.0,357.5 1236.8,368.0 1253.0,379.0C1269.2,390.0 1286.2,403.5 1299.0,415.0C1311.8,426.5 1320.6,436.2 1330.0,448.0C1339.4,459.8 1347.9,472.3 1355.6,486.0C1363.3,499.7 1370.1,514.7 1376.0,530.0C1381.9,545.3 1387.2,563.5 1391.0,578.0C1394.8,592.5 1397.2,605.0 1399.0,617.0C1400.8,629.0 1402.4,636.0 1402.0,650.0C1401.6,664.0 1399.2,684.0 1396.5,701.0C1393.8,718.0 1390.8,735.3 1386.0,752.0C1381.2,768.7 1375.2,785.7 1368.0,801.0C1360.8,816.3 1353.6,830.0 1343.0,844.0C1332.4,858.0 1317.3,873.0 1304.5,885.0C1291.7,897.0 1278.8,906.7 1266.0,916.0C1253.2,925.3 1240.8,933.2 1228.0,941.0C1215.2,948.8 1204.5,956.5 1189.5,963.0C1174.5,969.5 1150.4,976.1 1138.0,979.7C1125.6,983.3 1122.5,983.3 1115.0,984.5C1107.5,985.7 1100.8,986.9 1093.0,987.0C1085.2,987.1 1076.5,986.7 1068.0,985.0C1059.5,983.3 1050.2,981.3 1042.0,977.0C1033.8,972.7 1026.2,966.7 1019.0,959.0C1011.8,951.3 1005.3,942.0 999.0,931.0C992.7,920.0 986.6,907.5 981.0,893.0C975.4,878.5 969.9,861.1 965.6,844.0C961.3,826.9 957.8,810.1 955.0,790.6C952.2,771.1 950.3,750.1 949.0,726.7C947.7,703.3 946.8,676.9 947.0,650.0C947.2,623.1 948.0,592.4 950.0,565.6C952.0,538.8 955.2,511.6 959.0,489.0C962.8,466.4 967.7,447.5 973.0,430.0C978.3,412.5 984.2,397.7 991.0,384.0C997.8,370.3 1005.5,357.3 1014.0,348.0C1022.5,338.7 1033.0,332.7 1042.0,328.0C1051.0,323.3 1059.5,321.7 1068.0,320.0C1076.5,318.3 1084.7,318.0 1093.0,318.0Z')"></div>
<svg class="abs" width="2559" height="1330" viewBox="0 0 2559 1330" style="left:0;top:0"><defs><linearGradient id="ig" gradientUnits="userSpaceOnUse" x1="0" y1="404" x2="0" y2="902"><stop offset="0.0000" stop-color="#4c4c47"/><stop offset="0.0161" stop-color="#50504a"/><stop offset="0.0422" stop-color="#565650"/><stop offset="0.0823" stop-color="#5f5f59"/><stop offset="0.1325" stop-color="#6e6d68"/><stop offset="0.1928" stop-color="#7b7a75"/><stop offset="0.2289" stop-color="#73726c"/><stop offset="0.2570" stop-color="#62615b"/><stop offset="0.2912" stop-color="#55544e"/><stop offset="0.3133" stop-color="#5e5c55"/><stop offset="0.3373" stop-color="#706b61"/><stop offset="0.3574" stop-color="#625e56"/><stop offset="0.3795" stop-color="#4b4943"/><stop offset="0.3996" stop-color="#5c5850"/><stop offset="0.4197" stop-color="#6e695e"/><stop offset="0.4458" stop-color="#888174"/><stop offset="0.4940" stop-color="#958e81"/><stop offset="0.5442" stop-color="#a0998b"/><stop offset="0.5964" stop-color="#ada596"/><stop offset="0.6386" stop-color="#bab2a3"/><stop offset="0.6546" stop-color="#cdc5b5"/><stop offset="0.6707" stop-color="#e8e3d6"/><stop offset="0.6888" stop-color="#fbf9f2"/><stop offset="0.7149" stop-color="#ffffff"/><stop offset="0.9679" stop-color="#ffffff"/><stop offset="0.9739" stop-color="#e4e4dc"/><stop offset="0.9799" stop-color="#d2d2ca"/><stop offset="1.0000" stop-color="#cfcfc8"/></linearGradient></defs><path d="M1093.0,318.0C1101.3,318.0 1108.3,318.3 1118.0,320.0C1127.7,321.7 1137.0,323.2 1151.0,328.0C1165.0,332.8 1185.0,340.5 1202.0,349.0C1219.0,357.5 1236.8,368.0 1253.0,379.0C1269.2,390.0 1286.2,403.5 1299.0,415.0C1311.8,426.5 1320.6,436.2 1330.0,448.0C1339.4,459.8 1347.9,472.3 1355.6,486.0C1363.3,499.7 1370.1,514.7 1376.0,530.0C1381.9,545.3 1387.2,563.5 1391.0,578.0C1394.8,592.5 1397.2,605.0 1399.0,617.0C1400.8,629.0 1402.4,636.0 1402.0,650.0C1401.6,664.0 1399.2,684.0 1396.5,701.0C1393.8,718.0 1390.8,735.3 1386.0,752.0C1381.2,768.7 1375.2,785.7 1368.0,801.0C1360.8,816.3 1353.6,830.0 1343.0,844.0C1332.4,858.0 1317.3,873.0 1304.5,885.0C1291.7,897.0 1278.8,906.7 1266.0,916.0C1253.2,925.3 1240.8,933.2 1228.0,941.0C1215.2,948.8 1204.5,956.5 1189.5,963.0C1174.5,969.5 1150.4,976.1 1138.0,979.7C1125.6,983.3 1122.5,983.3 1115.0,984.5C1107.5,985.7 1100.8,986.9 1093.0,987.0C1085.2,987.1 1076.5,986.7 1068.0,985.0C1059.5,983.3 1050.2,981.3 1042.0,977.0C1033.8,972.7 1026.2,966.7 1019.0,959.0C1011.8,951.3 1005.3,942.0 999.0,931.0C992.7,920.0 986.6,907.5 981.0,893.0C975.4,878.5 969.9,861.1 965.6,844.0C961.3,826.9 957.8,810.1 955.0,790.6C952.2,771.1 950.3,750.1 949.0,726.7C947.7,703.3 946.8,676.9 947.0,650.0C947.2,623.1 948.0,592.4 950.0,565.6C952.0,538.8 955.2,511.6 959.0,489.0C962.8,466.4 967.7,447.5 973.0,430.0C978.3,412.5 984.2,397.7 991.0,384.0C997.8,370.3 1005.5,357.3 1014.0,348.0C1022.5,338.7 1033.0,332.7 1042.0,328.0C1051.0,323.3 1059.5,321.7 1068.0,320.0C1076.5,318.3 1084.7,318.0 1093.0,318.0Z" fill="none" stroke="#7a10f0" stroke-width="1.2"/><path d="M1085.0,404.0C1089.5,404.2 1089.0,403.8 1100.0,406.0C1111.0,408.2 1134.0,410.8 1151.0,417.0C1168.0,423.2 1186.7,433.6 1202.0,443.0C1217.3,452.4 1230.2,462.6 1243.0,473.6C1255.8,484.6 1268.8,497.9 1279.0,509.0C1289.2,520.1 1297.3,529.7 1304.5,540.0C1311.7,550.3 1317.3,560.9 1322.0,570.7C1326.7,580.5 1330.0,589.2 1332.6,599.0C1335.2,608.8 1336.6,621.0 1337.7,629.5C1338.8,638.0 1339.5,640.2 1339.0,650.0C1338.5,659.8 1337.3,675.2 1335.0,688.0C1332.7,700.8 1329.2,714.3 1325.0,726.7C1320.8,739.1 1316.0,751.0 1309.6,762.5C1303.2,774.0 1296.0,784.6 1286.6,795.7C1277.2,806.8 1264.9,818.8 1253.0,829.0C1241.1,839.2 1227.7,848.9 1215.0,857.0C1202.3,865.1 1189.5,871.7 1176.7,877.5C1163.9,883.3 1149.1,888.3 1138.0,892.0C1126.9,895.7 1117.7,898.0 1110.0,899.5C1102.3,901.0 1098.2,901.4 1092.0,901.3C1085.8,901.2 1080.5,901.3 1073.0,899.0C1065.5,896.7 1054.2,893.4 1047.0,887.7C1039.8,882.0 1034.5,873.7 1029.5,864.7C1024.5,855.8 1020.3,846.4 1016.7,834.0C1013.1,821.6 1010.1,808.5 1007.7,790.6C1005.4,772.7 1003.7,750.1 1002.6,726.7C1001.5,703.3 1001.0,676.9 1001.0,650.0C1001.0,623.1 1001.8,588.3 1002.6,565.6C1003.4,542.9 1004.1,531.1 1006.0,514.0C1007.9,496.9 1010.5,477.0 1014.0,463.0C1017.5,449.0 1021.5,438.8 1027.0,430.0C1032.5,421.2 1039.3,414.2 1047.0,410.0C1054.7,405.8 1066.7,405.5 1073.0,404.5C1079.3,403.5 1080.5,403.8 1085.0,404.0Z" fill="url(#ig)" stroke="#7a1af5" stroke-width="1.2"/><ellipse cx="1798.3" cy="652.0" rx="224.3" ry="288.0" fill="none" stroke="#6a14e4" stroke-width="2"/><ellipse cx="1794.2" cy="652.3" rx="167.8" ry="215.7" fill="none" stroke="#6a14e4" stroke-width="2"/></svg>
<div class="b" style="left:0px;top:0px;width:2559px;height:1px;background:#7c7c7c"></div>
<div class="b" style="left:90px;top:1px;width:799px;height:33px;background:#d3d3d3;border-bottom:1px solid #8e8e8e;border-right:1px solid #9a9a9a"></div>
<div class="b" style="left:0px;top:1px;width:90px;height:33px;background:linear-gradient(#f1f1f1,#fbfbfb)"></div>
<span class="t" style="left:10.00px;top:8.91px;font-size:17px;letter-spacing:0.021px;color:#333;font-weight:bold;">Features</span>
<div class="b" style="left:90px;top:1px;width:1px;height:33px;background:#9a9a9a"></div>
<span class="t" style="left:100.40px;top:8.91px;font-size:17px;letter-spacing:-0.170px;color:#2a2a2a;">Sketch</span>
<div class="b" style="left:161px;top:1px;width:1px;height:33px;background:#9a9a9a"></div>
<span class="t" style="left:172.20px;top:8.91px;font-size:17px;letter-spacing:-0.314px;color:#2a2a2a;">Surfaces</span>
<div class="b" style="left:249px;top:1px;width:1px;height:33px;background:#9a9a9a"></div>
<span class="t" style="left:259.40px;top:8.91px;font-size:17px;letter-spacing:0.400px;color:#2a2a2a;">Weldments</span>
<div class="b" style="left:358px;top:1px;width:1px;height:33px;background:#9a9a9a"></div>
<span class="t" style="left:370.00px;top:8.91px;font-size:17px;letter-spacing:0.540px;color:#2a2a2a;">Markup</span>
<div class="b" style="left:439px;top:1px;width:1px;height:33px;background:#9a9a9a"></div>
<span class="t" style="left:451.90px;top:8.91px;font-size:17px;letter-spacing:-0.350px;color:#2a2a2a;">Evaluate</span>
<div class="b" style="left:526px;top:1px;width:1px;height:33px;background:#9a9a9a"></div>
<span class="t" style="left:538.60px;top:8.91px;font-size:17px;letter-spacing:0.346px;color:#2a2a2a;">MBD Dimensions</span>
<div class="b" style="left:687px;top:1px;width:1px;height:33px;background:#9a9a9a"></div>
<span class="t" style="left:697.80px;top:8.91px;font-size:17px;letter-spacing:0.118px;color:#2a2a2a;">SOLIDWORKS Add-Ins</span>
<div class="b" style="left:0px;top:34px;width:270px;height:1270px;background:#f7f7f7"></div>
<div class="b" style="left:270px;top:34px;width:1px;height:1271px;background:#8a8a8a"></div>
<div class="b" style="left:0px;top:33px;width:889px;height:1px;background:#858c8a"></div>
<div class="b" style="left:0px;top:34px;width:268px;height:1px;background:#eef0f0"></div>
<div class="b" style="left:0px;top:38px;width:268px;height:1px;background:#d6d6d6"></div>
<div class="b" style="left:0px;top:63px;width:268px;height:1px;background:#d8d8d8"></div>
<svg class="abs" style="left:127.9px;top:44.9px;" width="11.4" height="11.4" viewBox="0 0 11.4 11.4"><defs><radialGradient id="dg13350" cx="0.4" cy="0.35" r="0.8"><stop offset="0" stop-color="#e4e4e4"/><stop offset="1" stop-color="#bdbdbd"/></radialGradient></defs><circle cx="5.7" cy="5.7" r="4.2" fill="url(#dg13350)" stroke="#9c9c9c" stroke-width="0.9"/></svg>
<div class="b" style="left:271px;top:623px;width:13px;height:59px;background:#f5f5f5;border:1px solid #7c7c7c;border-left:none"></div>
<div class="b" style="left:270px;top:624px;width:1px;height:57px;background:#f5f5f5"></div>
<svg class="abs" style="left:270px;top:646px;" width="12" height="12" viewBox="0 0 12 12"><defs><radialGradient id="dg276652" cx="0.4" cy="0.35" r="0.8"><stop offset="0" stop-color="#e4e4e4"/><stop offset="1" stop-color="#bdbdbd"/></radialGradient></defs><circle cx="6" cy="6" r="4.5" fill="url(#dg276652)" stroke="#9c9c9c" stroke-width="0.9"/></svg>
<div class="b" style="left:2px;top:68px;width:52px;height:38px;background:#d3d3d3;border:1px solid #a0a0a0;border-bottom:1px solid #8e8e8e"></div>
<div class="b" style="left:105px;top:68px;width:157px;height:38px;background:#d3d3d3;border:1px solid #a0a0a0;border-bottom:1px solid #8e8e8e"></div>
<div class="b" style="left:157px;top:69px;width:1px;height:36px;background:#a0a0a0"></div>
<div class="b" style="left:209px;top:69px;width:1px;height:36px;background:#a0a0a0"></div>
<div class="b" style="left:2px;top:68px;width:260px;height:1px;background:#7e7e7e"></div>
<div class="b" style="left:0px;top:105px;width:54px;height:1px;background:#8e8e8e"></div>
<div class="b" style="left:105px;top:105px;width:163px;height:1px;background:#8e8e8e"></div>
<svg class="abs" style="left:15px;top:72.75px;" width="26" height="28.5" viewBox="-0.3 -0.3 26.3 28.8"><g stroke="#4c3c00" stroke-width="1.15" stroke-linejoin="round">
<path d="M0.54,8.97 L5.7,6.8 L5.7,2.7 L12.4,0.5 L20,2.7 L20,11.4 L25.1,13.7 L25.1,22.8 L17.7,27.7 L0.54,16.3 Z" fill="#f5cd1a"/>
<path d="M5.7,2.7 L12.4,0.5 L20,2.7 L11.8,4.8 Z" fill="#fbe88a"/>
<path d="M11.8,4.8 L20,2.7 L20,11.4 L11.8,14 Z" fill="#f7de56"/>
<path d="M11.8,14 L20,11.4 L25.1,13.7 L17.7,17.7 Z" fill="#fcec9a"/>
<path d="M17.7,17.7 L25.1,13.7 L25.1,22.8 L17.7,27.7 Z" fill="#f8e052"/>
<path d="M0.54,8.97 L5.7,6.8 L5.7,2.7 L11.8,4.8 L11.8,14 L17.7,17.7 L17.7,27.7 L0.54,16.3 Z" fill="#f5cb14"/>
<path d="M0.54,8.97 L5.7,6.8 L5.7,11 Z" fill="#fbe88a"/>
</g></svg>
<svg class="abs" style="left:65.5px;top:74.2px;" width="28" height="26" viewBox="0 0 28 26"><defs><linearGradient id="pmh" x1="0" y1="0" x2="0" y2="1"><stop offset="0" stop-color="#5da2c8"/><stop offset="1" stop-color="#2b6e9e"/></linearGradient>
<linearGradient id="pmb" x1="0" y1="0" x2="1" y2="1"><stop offset="0" stop-color="#f8fbfd"/><stop offset="1" stop-color="#d6d6d6"/></linearGradient>
<linearGradient id="pmi" x1="0" y1="0" x2="0" y2="1"><stop offset="0" stop-color="#6db3d6"/><stop offset="1" stop-color="#3680ac"/></linearGradient></defs>
<rect x="0.7" y="0.7" width="26.6" height="24.6" rx="1.8" fill="url(#pmb)" stroke="#12405e" stroke-width="1.3"/>
<path d="M0.7,5.2V2.4Q0.7,0.7 2.4,0.7H25.6Q27.3,0.7 27.3,2.4V5.2Z" fill="url(#pmh)" stroke="#12405e" stroke-width="1.1"/>
<g fill="url(#pmi)" stroke="#134a6c" stroke-width="1">
<rect x="3.3" y="6.7" width="6.6" height="3.7" rx="1"/><rect x="3.3" y="12.6" width="6.6" height="3.7" rx="1"/><rect x="3.3" y="18.6" width="6.6" height="3.7" rx="1"/></g>
<g stroke="#2b2b2b" stroke-width="1.1"><path d="M12.8,8.5H24.4M12.8,14.5H24.4M12.8,20.5H24.4"/></g></svg>
<svg class="abs" style="left:120.2px;top:72.8px;" width="24" height="28.5" viewBox="0 0 24 28.5"><g fill="#f6f6f6" stroke="#2c2c2c" stroke-width="1.15" stroke-linejoin="round">
<rect x="3" y="4.8" width="8" height="1.5"/><rect x="3" y="20.9" width="11" height="1.6"/>
<rect x="0.7" y="0.9" width="2.7" height="26.5"/>
<path d="M8,9.6 V2.2 Q8,1 9.2,1 H16.4 Q17.4,1 18.2,1.8 L19.3,3.3 V12.3 H9.9 Z" fill="#e9e9e9"/>
<rect x="9.9" y="3.3" width="9.4" height="9" rx="0.6"/>
<path d="M11,24.6 V17.2 Q11,16 12.2,16 H19.4 Q20.4,16 21.2,16.8 L22.4,18.3 V27.3 H12.9 Z" fill="#e9e9e9"/>
<rect x="12.9" y="18.3" width="9.5" height="9" rx="0.6"/></g></svg>
<svg class="abs" style="left:169.5px;top:72.8px;" width="28" height="28" viewBox="0 0 28 28"><g fill="none" stroke="#1e1e1e"><circle cx="14" cy="14" r="8.9" stroke-width="2.4"/><path d="M0.2,14H27.8M14,0.2V27.8" stroke-width="2"/></g></svg>
<svg class="abs" style="left:222.5px;top:73.5px;" width="26" height="26" viewBox="0 0 26 26"><defs><clipPath id="bcla"><circle cx="13" cy="13" r="13"/></clipPath>
<radialGradient id="bsha" cx="0.35" cy="0.28" r="0.8"><stop offset="0" stop-color="#fff" stop-opacity="0.75"/><stop offset="0.25" stop-color="#fff" stop-opacity="0.15"/><stop offset="0.7" stop-color="#000" stop-opacity="0"/><stop offset="1" stop-color="#000" stop-opacity="0.35"/></radialGradient></defs><g clip-path="url(#bcla)"><rect x="0" y="0" width="13.65" height="13.65" fill="#2456d8"/><rect x="13.65" y="0" width="13" height="13.65" fill="#d8202a"/><path d="M0,13 Q7.8,12.35 14.3,16.25 L11.7,26 L0,26 Z" fill="#25a548"/><path d="M14.3,16.25 Q19.5,13 26,12.35 L26,26 L11.7,26 Z" fill="#e9b91e"/><path d="M12.35,0 Q13,9.1 14.3,16.25 L26,0Z" fill="#d8202a"/><ellipse cx="19.76" cy="7.15" rx="5.46" ry="8.06" fill="#050505" transform="rotate(-25 19.76 7.15)"/><circle cx="13" cy="13" r="13" fill="url(#bsha)"/></g></svg>
<svg class="abs" style="left:12.8px;top:117.7px;" width="28.5" height="28" viewBox="0 0 28.5 28"><defs><linearGradient id="dfb" x1="0" y1="0" x2="1" y2="1"><stop offset="0" stop-color="#9ad2ea"/><stop offset="1" stop-color="#3d8fbe"/></linearGradient>
<linearGradient id="dfl" x1="0" y1="0" x2="1" y2="0"><stop offset="0" stop-color="#fdfdfd"/><stop offset="1" stop-color="#c4c8cb"/></linearGradient></defs>
<g stroke="#2b2b2b" stroke-width="1.6" stroke-linejoin="round">
<path d="M1,5.6 L14.6,1 L24,5.8 L24,24.4 L9.4,27.2 L1,21.4 Z" fill="#eef0f1"/>
<path d="M1,5.6 L9.4,10.6 L9.4,27.2 L1,21.4 Z" fill="url(#dfl)"/>
<path d="M1,5.6 L14.6,1 L24,5.8 L9.4,10.6 Z" fill="#fafbfb"/></g>
<path d="M9.6,10.8 L24,6 L24,24.4 L9.6,27.2 Z" fill="url(#dfb)" stroke="#0f4c6e" stroke-width="1.3" stroke-linejoin="round"/>
<path d="M18.4,17.6L27,26.4M27,17.6L18.4,26.4" stroke="#f4f4f4" stroke-width="4.6"/>
<path d="M18.4,17.6L27,26.4M27,17.6L18.4,26.4" stroke="#262626" stroke-width="2.6"/></svg>
<span class="t" style="left:48.60px;top:123.46px;font-size:18px;letter-spacing:-0.545px;color:#111;font-weight:bold;">DeleteFace1</span>
<svg class="abs" style="left:232px;top:119.7px;" width="23" height="23" viewBox="0 0 23 23"><circle cx="11.5" cy="11.5" r="9.8" fill="#f6f6f6" stroke="#7a7a7a" stroke-width="2"/>
<text x="11.5" y="18" text-anchor="middle" font-family="Liberation Sans, sans-serif" font-weight="bold" font-size="18.5" fill="#3c79b2" stroke="#3c79b2" stroke-width="0.5">?</text></svg>
<svg class="abs" style="left:12px;top:167.4px;" width="24.4" height="19.1" viewBox="0 0 24.4 19.1"><defs><linearGradient id="cg12" x1="0" y1="0" x2="0" y2="1"><stop offset="0" stop-color="#2e9b2e"/><stop offset="1" stop-color="#1c7a1c"/></linearGradient></defs><path d="M0.3,11.6 L3.6,8.3 L8.6,12.6 L21.4,0.3 L24.2,3.2 L8.8,19 Z" fill="url(#cg12)" opacity="1"/></svg>
<svg class="abs" style="left:49.2px;top:168.7px;" width="18.5" height="17.8" viewBox="0 0 18.5 17.8"><path d="M2.6,0.4 L9.3,6.6 L15.6,0.4 L18.2,2.9 L12,8.9 L18.2,15.2 L15.8,17.6 L9.3,11.3 L2.7,17.6 L0.3,15.2 L6.5,8.9 L0.3,2.8 Z" fill="#e0301e" opacity="1"/></svg>
<div class="b" style="left:6px;top:202px;width:257px;height:1px;background:#a8a8a8"></div>
<span class="t" style="left:12.40px;top:208.11px;font-size:17px;letter-spacing:-0.050px;color:#333;font-weight:bold;">Selections</span>
<svg class="abs" style="left:249.8px;top:213px;" width="13.2" height="8.7" viewBox="0 0 13.2 8.7"><path d="M1,7.5 L6.6,1.2 L12.2,7.5" fill="none" stroke="#646464" stroke-width="2"/></svg>
<svg class="abs" style="left:17.9px;top:248px;" width="24.1" height="28" viewBox="0 0 24.1 28"><defs><linearGradient id="cfb" x1="0" y1="0" x2="1" y2="1"><stop offset="0" stop-color="#86c3e0"/><stop offset="1" stop-color="#2f80b2"/></linearGradient></defs>
<g stroke="#2a3238" stroke-width="1.5" stroke-linejoin="round">
<path d="M1,7.2 L14.6,1 L23.2,5 L23.2,21 L8.6,27 L1,20.6 Z" fill="#f3f4f5"/>
<path d="M1,7.2 L8.6,11.4 L8.6,27 L1,20.6 Z" fill="#f7f7f7"/>
<path d="M8.6,11.4 L23.2,5 L23.2,21 L8.6,27 Z" fill="url(#cfb)"/>
<path d="M1,7.2 L14.6,1 L23.2,5 L8.6,11.4Z" fill="#fdfdfd"/></g></svg>
<div class="b" style="left:54px;top:238px;width:209px;height:57px;background:#cce4f7;border:2px solid #6db3e6;border-right:none"></div>
<span class="t" style="left:58.20px;top:245.11px;font-size:17px;letter-spacing:-0.183px;color:#111;">Face&lt;3&gt;</span>
<svg class="abs" style="left:157.2px;top:300.7px;" width="9.6" height="9.6" viewBox="0 0 9.6 9.6"><defs><radialGradient id="dg162305" cx="0.4" cy="0.35" r="0.8"><stop offset="0" stop-color="#e4e4e4"/><stop offset="1" stop-color="#bdbdbd"/></radialGradient></defs><circle cx="4.8" cy="4.8" r="3.3" fill="url(#dg162305)" stroke="#9c9c9c" stroke-width="0.9"/></svg>
<svg class="abs" style="left:54px;top:324.3px;" width="19.9" height="19.3" viewBox="0 0 19.9 19.3"><defs><linearGradient id="cbg" x1="0" y1="0" x2="1" y2="1"><stop offset="0" stop-color="#d9e4f0"/><stop offset="1" stop-color="#fafcfe"/></linearGradient></defs>
<rect x="1" y="1" width="17.9" height="17.3" fill="url(#cbg)" stroke="#1d3b6b" stroke-width="1.8"/>
<path d="M4,9.6 L6.2,7.6 L8.6,11 L14.6,4.4 L16.4,6.2 L8.6,15.6 Z" fill="#2f9e2f"/></svg>
<span class="t" style="left:79.90px;top:326.31px;font-size:17px;letter-spacing:0.431px;color:#555;">Show selection toolbar</span>
<div class="b" style="left:6px;top:366px;width:257px;height:1px;background:#a8a8a8"></div>
<span class="t" style="left:12.40px;top:371.31px;font-size:17px;letter-spacing:0.333px;color:#333;font-weight:bold;">Options</span>
<svg class="abs" style="left:249.8px;top:376.2px;" width="13.2" height="8.7" viewBox="0 0 13.2 8.7"><path d="M1,7.5 L6.6,1.2 L12.2,7.5" fill="none" stroke="#646464" stroke-width="2"/></svg>
<svg class="abs" style="left:53.1px;top:403px;" width="21" height="21" viewBox="0 0 21 21"><defs><radialGradient id="r413" cx="0.5" cy="0.5" r="0.5"><stop offset="0" stop-color="#f7eede"/><stop offset="0.6" stop-color="#eef1f3"/><stop offset="1" stop-color="#dfe9f4"/></radialGradient></defs><circle cx="10.5" cy="10.5" r="8.8" fill="url(#r413)" stroke="#1e3a6a" stroke-width="1.7"/><circle cx="10.5" cy="10.5" r="8" fill="#f4f6fb"/><circle cx="10.5" cy="10.5" r="8.8" fill="none" stroke="#2a2f7e" stroke-width="1.7"/><defs><radialGradient id="r413g" cx="0.4" cy="0.4" r="0.6"><stop offset="0" stop-color="#7fe07a"/><stop offset="1" stop-color="#36b23a"/></radialGradient></defs><circle cx="10.5" cy="10.5" r="3.6" fill="url(#r413g)"/></svg>
<span class="t" style="left:81.80px;top:406.41px;font-size:17px;letter-spacing:0.270px;color:#444;">Delete</span>
<svg class="abs" style="left:53.1px;top:431.4px;" width="21" height="21" viewBox="0 0 21 21"><defs><radialGradient id="r441" cx="0.5" cy="0.5" r="0.5"><stop offset="0" stop-color="#f7eede"/><stop offset="0.6" stop-color="#eef1f3"/><stop offset="1" stop-color="#dfe9f4"/></radialGradient></defs><circle cx="10.5" cy="10.5" r="8.8" fill="url(#r441)" stroke="#1e3a6a" stroke-width="1.7"/></svg>
<span class="t" style="left:81.80px;top:434.51px;font-size:17px;letter-spacing:0.167px;color:#444;">Delete and Patch</span>
<svg class="abs" style="left:53.1px;top:459.9px;" width="21" height="21" viewBox="0 0 21 21"><defs><radialGradient id="r470" cx="0.5" cy="0.5" r="0.5"><stop offset="0" stop-color="#f7eede"/><stop offset="0.6" stop-color="#eef1f3"/><stop offset="1" stop-color="#dfe9f4"/></radialGradient></defs><circle cx="10.5" cy="10.5" r="8.8" fill="url(#r470)" stroke="#1e3a6a" stroke-width="1.7"/></svg>
<span class="t" style="left:81.80px;top:463.51px;font-size:17px;letter-spacing:0.225px;color:#444;">Delete and Fill</span>
<svg class="abs" style="left:280px;top:46px" width="10" height="14"><path d="M1.5,1.2L7.6,7L1.5,12.8Z" fill="#222"/></svg>
<svg class="abs" style="left:309.12px;top:40.32px;" width="24.96" height="27.36" viewBox="-0.3 -0.3 26.3 28.8"><g stroke="#4c3c00" stroke-width="1.15" stroke-linejoin="round">
<path d="M0.54,8.97 L5.7,6.8 L5.7,2.7 L12.4,0.5 L20,2.7 L20,11.4 L25.1,13.7 L25.1,22.8 L17.7,27.7 L0.54,16.3 Z" fill="#f5cd1a"/>
<path d="M5.7,2.7 L12.4,0.5 L20,2.7 L11.8,4.8 Z" fill="#fbe88a"/>
<path d="M11.8,4.8 L20,2.7 L20,11.4 L11.8,14 Z" fill="#f7de56"/>
<path d="M11.8,14 L20,11.4 L25.1,13.7 L17.7,17.7 Z" fill="#fcec9a"/>
<path d="M17.7,17.7 L25.1,13.7 L25.1,22.8 L17.7,27.7 Z" fill="#f8e052"/>
<path d="M0.54,8.97 L5.7,6.8 L5.7,2.7 L11.8,4.8 L11.8,14 L17.7,17.7 L17.7,27.7 L0.54,16.3 Z" fill="#f5cb14"/>
<path d="M0.54,8.97 L5.7,6.8 L5.7,11 Z" fill="#fbe88a"/>
</g></svg>
<span class="t" style="left:342.00px;top:50.01px;font-size:17px;letter-spacing:-0.211px;color:#222;">Example 2 Ro...</span>
<svg class="abs" style="left:1185px;top:0px;" width="460" height="42" viewBox="0 0 460 42"><defs>
<linearGradient id="hb" x1="0" y1="0" x2="1" y2="1"><stop offset="0" stop-color="#9ad0ea"/><stop offset="1" stop-color="#4f97c2"/></linearGradient>
<linearGradient id="hb2" x1="0" y1="0" x2="0" y2="1"><stop offset="0" stop-color="#74b6dc"/><stop offset="1" stop-color="#94cdea"/></linearGradient>
<linearGradient id="hg" x1="0" y1="0" x2="0" y2="1"><stop offset="0" stop-color="#cfcfcf"/><stop offset="1" stop-color="#f4f4f4"/></linearGradient>
<radialGradient id="hdb" cx="0.4" cy="0.3" r="0.8"><stop offset="0" stop-color="#f4f4f4"/><stop offset="1" stop-color="#dcdcdc"/></radialGradient>
<linearGradient id="hcl" x1="0" y1="0" x2="1" y2="0"><stop offset="0" stop-color="#86c0de"/><stop offset="0.5" stop-color="#a8d8ee"/><stop offset="0.6" stop-color="#fbfbfb"/><stop offset="1" stop-color="#e6e6e6"/></linearGradient>
</defs><path d="M14.9,28.4 L10.7,32.8" stroke="#4f7896" stroke-width="4.4" stroke-linecap="round"/><path d="M14.9,28.4 L10.7,32.8" stroke="#8cc2e6" stroke-width="2.5" stroke-linecap="round"/><path d="M18.5,24.7 L15.3,28" stroke="#707070" stroke-width="2.2"/><circle cx="24.3" cy="18.5" r="8.6" fill="#eaf0f0" stroke="#8c8c8c" stroke-width="1.5"/><g fill="#585858"><path d="M24.3,12.1 l2.3,2.6 h-4.6z"/><path d="M24.3,24.9 l2.3,-2.6 h-4.6z"/><path d="M17.9,18.5 l2.6,-2.3 v4.6z"/><path d="M30.7,18.5 l-2.6,-2.3 v4.6z"/></g><rect x="55.4" y="8.5" width="17.2" height="17.2" fill="none" stroke="#2e2e2e" stroke-width="1.2" stroke-dasharray="3.4 2.4"/><path d="M51.9,29.3 L47.7,33.7" stroke="#4f7896" stroke-width="4.4" stroke-linecap="round"/><path d="M51.9,29.3 L47.7,33.7" stroke="#8cc2e6" stroke-width="2.5" stroke-linecap="round"/><path d="M55.5,25.6 L52.3,28.9" stroke="#707070" stroke-width="2.2"/><circle cx="61.3" cy="19.4" r="8.6" fill="#eaf0f0" stroke="#8c8c8c" stroke-width="1.5"/><circle cx="61.3" cy="19.4" r="7.6" fill="#e9efef"/><path d="M56.3,18.4 a6,6 0 0 1 6,-4" stroke="#fff" stroke-width="1.6" fill="none"/><g transform="translate(89.6,29.4) rotate(-44.5)" stroke="#9a9a9a" stroke-width="1.1" stroke-linejoin="round"><path d="M19.5,-3.1 L27.4,-2.7 Q28.6,0 27.4,2.7 L19.5,3.1Z" fill="#f6f6f6"/><path d="M12.6,-4 L19.5,-3.5 V3.5 L12.6,4Z" fill="#fafafa"/><path d="M0,-5.8 L12.6,-4.7 V4.7 L0,5.8Z" fill="#f1f1f1"/><ellipse cx="0" cy="0" rx="2.7" ry="5.8" fill="#e9e9e9"/><ellipse cx="0.2" cy="0" rx="1.5" ry="3.7" fill="#d6d6d6" stroke-width="0.8"/></g><path d="M96.2,25.8 l7.2,-5.4 v3.2 h7.5 v5 h-7.5 v3.2z" fill="#7bb8e0" stroke="#2f6f9c" stroke-width="1"/><g stroke="#dedede" stroke-width="1" fill="#f4f4f4" stroke-linejoin="round"><path d="M121.4,16 Q123,10 134.6,9.2 Q146,9.4 148.4,14.2 L148.4,28.4 Q145,24 134.6,23.6 Q124,24 121.4,30Z"/><path d="M121.6,16.4 L131.6,13.6 L131.6,32.4 L121.6,35Z" fill="#ececec"/><path d="M141.6,12.4 L148.4,14.4 L148.4,28.6 L141.6,30.6Z" fill="#ececec"/><path d="M131.6,13.6 L141.6,12.4 L141.6,30.6 L131.6,32.4Z" fill="#f8f8f8"/></g><path d="M159.2,16.2 L167.3,8.1 H186.7 V27.4 L178.5,35.8 M178.5,16.2 L186.7,8.1 M167.3,8.1 V16.2 M178.5,27.4 H186.7" fill="none" stroke="#3c3c3c" stroke-width="1.1"/><path d="M172.9,8.8 V12.8" stroke="#484848" stroke-width="1.8" fill="none"/><path d="M172.9,15.6 l2.5,-2.8 h-5z" fill="#484848"/><path d="M186.2,21.8 H182" stroke="#484848" stroke-width="1.8" fill="none"/><path d="M179.2,21.8 l2.8,-2.5 v5z" fill="#484848"/><defs><linearGradient id="hb3" x1="0" y1="0" x2="1" y2="1"><stop offset="0" stop-color="#a6def5"/><stop offset="1" stop-color="#5fa6ce"/></linearGradient></defs><rect x="159.2" y="16.2" width="19.3" height="19.6" fill="url(#hb3)" stroke="#2a5c7c" stroke-width="1.2"/><path d="M194.7,20 h7.2 l-3.6,4.2 z" fill="#8c8c8c"/><defs><linearGradient id="hc1" x1="0" y1="0" x2="1" y2="0"><stop offset="0" stop-color="#8cc6e2"/><stop offset="0.42" stop-color="#a9d8ee"/><stop offset="0.5" stop-color="#f4f8fa"/><stop offset="1" stop-color="#ececec"/></linearGradient><linearGradient id="hc2" x1="0" y1="0" x2="1" y2="0"><stop offset="0" stop-color="#a8d8ee"/><stop offset="0.55" stop-color="#d8eef7"/><stop offset="0.7" stop-color="#fbfbfb"/><stop offset="1" stop-color="#f4f4f4"/></linearGradient><linearGradient id="hc3" x1="0" y1="0" x2="1" y2="1"><stop offset="0" stop-color="#86bcd8"/><stop offset="1" stop-color="#5a9cc2"/></linearGradient></defs><g stroke="#667882" stroke-width="1" stroke-linejoin="round"><path d="M214.3,12.1 L222.5,17.5 L222.5,34.5 L214.3,27.9Z" fill="url(#hc3)"/><path d="M222.5,17.5 L238,13.7 L238,29.4 L222.5,34.5Z" fill="url(#hc1)"/><path d="M214.3,12.1 L225.8,8.8 L238,13.7 L222.5,17.5Z" fill="url(#hc2)"/></g><path d="M247.6,19.8 h7.2 l-3.6,4.2 z" fill="#8c8c8c"/><path d="M265.1,21.8 C271.4,11 286.4,11 292.7,21.8 C286.4,32 271.4,32 265.1,21.8 Z" fill="#f2f2f2" stroke="#8c8c8c" stroke-width="1.7"/><path d="M278.9,13.6 a7,7.6 0 0 0 0,15.2z" fill="#4a4a4a"/><path d="M278.9,13.6 a7,7.6 0 0 1 0,15.2z" fill="#9a9a9a"/><circle cx="276.3" cy="20" r="1.6" fill="#ddd"/><path d="M278.9,11 V33" stroke="#5a5a5a" stroke-width="2.2"/><path d="M300.7,19.8 h7.2 l-3.6,4.2 z" fill="#8c8c8c"/><circle cx="330.2" cy="19.8" r="13.2" fill="url(#hdb)" opacity="0.9"/><path d="M334,31 l9,-9 l3.4,3.4 l-9,9z" fill="#e4e4e4" stroke="#f4f4f4" stroke-width="0.8"/><rect x="356" y="18.6" width="28" height="17" fill="#e6e6e6" opacity="0.9"/><g fill="#fafafa"><rect x="357" y="24" width="7" height="2.6"/><rect x="377" y="24" width="6" height="2.6"/><rect x="361" y="30" width="6" height="4"/><rect x="373" y="30" width="6" height="4"/></g><circle cx="369.7" cy="18" r="11.4" fill="url(#hdb)"/><path d="M391.7,19.8 h7.2 l-3.6,4.2 z" fill="#8c8c8c"/><rect x="410.3" y="10.4" width="25.4" height="17.6" fill="#595959"/><rect x="412.1" y="12.4" width="21.8" height="13.4" fill="url(#hg)"/><rect x="421.3" y="28" width="3.6" height="3.6" fill="#6a6a6a"/><rect x="418.1" y="31.2" width="10" height="1.8" fill="#6a6a6a"/><path d="M444.8,19.8 h7.2 l-3.6,4.2 z" fill="#8c8c8c"/></svg>
<svg class="abs" style="left:2370px;top:5px;" width="185" height="34" viewBox="0 0 185 34"><g fill="none" stroke="#9a9a9a" stroke-width="1.2"><rect x="4.3" y="6.6" width="17.6" height="21"/><rect x="42.6" y="6.6" width="17.6" height="21"/><rect x="121.8" y="7.6" width="15.6" height="11.4"/><rect x="115.4" y="15" width="15.6" height="11.4" fill="#fff"/><path d="M157.2,9 l15.4,15.4 M172.6,9 l-15.4,15.4" stroke-width="1.5"/></g><path d="M9,14 l-3.6,3 l3.6,3z" fill="#9a9a9a"/><path d="M55.6,14 l3.6,3 l-3.6,3z" fill="#9a9a9a"/><rect x="81" y="24" width="16" height="3" fill="#a2a2a2"/></svg>
<svg class="abs" style="left:2400px;top:48px;" width="52" height="42" viewBox="0 0 52 42"><path d="M4.4,20.9 L10.9,14.4 L20.3,22 L39.8,4.7 L47,11.5 L21,37.9Z" fill="#d2ecd0" stroke="#d2ecd0" stroke-width="0.8" stroke-linejoin="round"/></svg><svg class="abs" style="left:2468px;top:92px;" width="44" height="44" viewBox="0 0 44 44"><g fill="#f6d0cc"><rect x="2.6" y="17" width="39.3" height="10.2" rx="2.2" transform="rotate(44.7 22.25 22.1)"/><rect x="2.6" y="17" width="39.3" height="10.2" rx="2.2" transform="rotate(-44.7 22.25 22.1)"/></g></svg>
<svg class="abs" style="left:2519px;top:76px;" width="42" height="256" viewBox="0 0 42 256"><rect x="0.5" y="0.7" width="41" height="251.8" fill="#d3d3d3" stroke="#8e8e8e" stroke-width="1"/><rect x="1" y="145" width="41" height="35.5" fill="#fafafa"/><path d="M0.5,36.5 H41" stroke="#9a9a9a" stroke-width="1"/><path d="M0.5,72.5 H41" stroke="#9a9a9a" stroke-width="1"/><path d="M0.5,108.5 H41" stroke="#9a9a9a" stroke-width="1"/><path d="M0.5,144.5 H41" stroke="#9a9a9a" stroke-width="1"/><path d="M0.5,181.5 H41" stroke="#9a9a9a" stroke-width="1"/><path d="M0.5,216.5 H41" stroke="#9a9a9a" stroke-width="1"/><g transform="translate(0.6,1.1)"><path d="M7.1,17.9 L20.3,4.7 L34,17.9" fill="none" stroke="#1f5876" stroke-width="3.6" stroke-linejoin="miter"/>
<path d="M7.3,17.4 L20.3,4.6 L33.8,17.4" fill="none" stroke="#5fa9cc" stroke-width="1.3"/>
<path d="M9.9,17.6 L20.3,7.6 L30.8,17.6 V31.1 H9.9Z" fill="#f4f4f4" stroke="#2e2e2e" stroke-width="1.1"/>
<rect x="16.7" y="20.4" width="7.5" height="10.7" fill="#fbfbfb" stroke="#2e2e2e" stroke-width="1.2"/><path d="M22.8,24.6 h-2 v2.2 h2" fill="none" stroke="#2e2e2e" stroke-width="1"/></g><g transform="translate(0.6,36.8)"><defs><linearGradient id="bk" x1="0" y1="0" x2="1" y2="0"><stop offset="0" stop-color="#ffffff"/><stop offset="1" stop-color="#d0d0d0"/></linearGradient>
<linearGradient id="bk2" x1="0" y1="0" x2="0.3" y2="1"><stop offset="0" stop-color="#fdfdfd"/><stop offset="1" stop-color="#bcbcbc"/></linearGradient></defs>
<g stroke="#2e2e2e" stroke-width="1.1" stroke-linejoin="round">
<path d="M8.6,8.1 L15.4,12 L15.4,31.6 L8.6,25.7Z" fill="url(#bk2)"/>
<path d="M8.6,8.1 L13.4,5.2 L15.6,6.8 L17.6,4.8 L20.8,6.6 L22.8,4.6 L26,6.2 L27.8,4.6 L31.1,7.2 L15.4,12Z" fill="#f1f1f1"/>
<path d="M15.4,12 L20.6,10.4 L20.6,30 L15.4,31.6Z" fill="url(#bk)"/>
<path d="M20.6,10.4 L25.8,8.8 L25.8,28.6 L20.6,30Z" fill="url(#bk)"/>
<path d="M25.8,8.8 L31.1,7.2 L31.1,27 L25.8,28.6Z" fill="url(#bk)"/>
<path d="M20.6,10.4 L15.6,6.8 M25.8,8.8 L20.8,6.6" fill="none"/></g></g><g transform="translate(0.6,72.9)"><defs><linearGradient id="fo" x1="0" y1="0" x2="1" y2="1"><stop offset="0" stop-color="#fdfdfd"/><stop offset="1" stop-color="#c2c2c2"/></linearGradient>
<linearGradient id="fo2" x1="0" y1="0" x2="1" y2="0"><stop offset="0" stop-color="#b4b4b4"/><stop offset="1" stop-color="#e6e6e6"/></linearGradient></defs>
<path d="M5.2,30.2 V8.6 Q5.2,7.4 6.4,7.2 L12.5,6.7 L14,9.2 H30.1 V14.5 L14,15 Z" fill="url(#fo2)" stroke="#3a3a3a" stroke-width="1.2" stroke-linejoin="round"/>
<path d="M5.7,30.2 L14,15 L36,14.5 L28.6,30.2Z" fill="url(#fo)" stroke="#333" stroke-width="1.2" stroke-linejoin="round"/></g><g transform="translate(0.6,108.9)"><rect x="6" y="4.6" width="28" height="25.6" fill="#f7f7f7" stroke="#333" stroke-width="1.1"/>
<g fill="#f0c61a" stroke="#7a6200" stroke-width="0.8"><rect x="9.6" y="8.2" width="10.4" height="5.6"/><rect x="24" y="8.2" width="7" height="5.6"/><path d="M13.6,17.6 h3.6 v4.4 h3.4 v4.8 h-10.4 v-4.8 h3.4z"/></g>
<rect x="24" y="19.4" width="9.6" height="10.4" fill="#d9d9d9" stroke="#555" stroke-width="0.9"/><rect x="24" y="19.4" width="9.6" height="3" fill="#8c8c8c"/></g><g transform="translate(0.6,216.9)"><defs><radialGradient id="rfg" cx="0.4" cy="0.35" r="0.75"><stop offset="0" stop-color="#7fc0f4"/><stop offset="1" stop-color="#1a5fc4"/></radialGradient></defs>
<circle cx="20" cy="19" r="13.4" fill="url(#rfg)"/>
<path d="M8,17 C9,8 19,4.6 26,9 L29.4,4.8 L31.4,17.4 L19,15.6 L22.6,12.4 C18,10 12.6,12 11.6,17Z" fill="#f7fbff" stroke="#244a86" stroke-width="0.9" stroke-linejoin="round"/>
<path d="M32,21 C31,30 21,33.4 14,29 L10.6,33.2 L8.6,20.6 L21,22.4 L17.4,25.6 C22,28 27.4,26 28.4,21Z" fill="#f7fbff" stroke="#244a86" stroke-width="0.9" stroke-linejoin="round"/></g><g transform="translate(8.2,149.5)"><defs><clipPath id="bcltp"><circle cx="13" cy="13" r="13"/></clipPath>
<radialGradient id="bshtp" cx="0.35" cy="0.28" r="0.8"><stop offset="0" stop-color="#fff" stop-opacity="0.75"/><stop offset="0.25" stop-color="#fff" stop-opacity="0.15"/><stop offset="0.7" stop-color="#000" stop-opacity="0"/><stop offset="1" stop-color="#000" stop-opacity="0.35"/></radialGradient></defs><g clip-path="url(#bcltp)"><rect x="0" y="0" width="13.65" height="13.65" fill="#2456d8"/><rect x="13.65" y="0" width="13" height="13.65" fill="#d8202a"/><path d="M0,13 Q7.8,12.35 14.3,16.25 L11.7,26 L0,26 Z" fill="#25a548"/><path d="M14.3,16.25 Q19.5,13 26,12.35 L26,26 L11.7,26 Z" fill="#e9b91e"/><path d="M12.35,0 Q13,9.1 14.3,16.25 L26,0Z" fill="#d8202a"/><circle cx="13" cy="13" r="13" fill="url(#bshtp)"/></g></g><g transform="translate(6.4,186.6)"><rect x="0.6" y="0.6" width="26.8" height="24.4" fill="#f4f6f8" stroke="#12405e" stroke-width="1.2"/>
<rect x="0.6" y="0.6" width="26.8" height="4.4" fill="#3f86b4" stroke="#12405e" stroke-width="1"/>
<g fill="#4a94c0" stroke="#134a6c" stroke-width="0.9"><rect x="3" y="7.2" width="6.4" height="3.4" rx="0.8"/><rect x="3" y="12.8" width="6.4" height="3.4" rx="0.8"/><rect x="3" y="18.6" width="6.4" height="3.4" rx="0.8"/></g>
<path d="M12.6,9H24.6M12.6,14.6H24.6M12.6,20.4H24.6" stroke="#2b2b2b" stroke-width="1.1"/></g></svg>
<div class="b" style="left:1601px;top:439px;width:303px;height:50px;background:#f5f5f5;border:1px solid #9a9a9a"></div>
<div class="b" style="left:1689px;top:443px;width:42px;height:42px;background:#fdfdfd;border:1px solid #c4c4c4"></div>
<svg class="abs" style="left:1601px;top:439px;" width="303" height="50" viewBox="0 0 303 50"><defs><linearGradient id="sb" x1="0" y1="0" x2="1" y2="1"><stop offset="0" stop-color="#86c2e2"/><stop offset="1" stop-color="#3585b6"/></linearGradient>
<linearGradient id="sb2" x1="0" y1="0" x2="0" y2="1"><stop offset="0" stop-color="#3f8ab8"/><stop offset="1" stop-color="#2f7aa8"/></linearGradient>
<linearGradient id="sw" x1="0" y1="0" x2="0.5" y2="1"><stop offset="0" stop-color="#ffffff"/><stop offset="1" stop-color="#c4c9cd"/></linearGradient>
<linearGradient id="sr" x1="0" y1="0" x2="0.4" y2="1"><stop offset="0" stop-color="#f4501c"/><stop offset="1" stop-color="#c4170a"/></linearGradient></defs><g transform="translate(11.7,10.9)" stroke="#103c58" stroke-width="1" stroke-linejoin="round"><path d="M0.54,8.97 L5.7,6.8 L5.7,2.7 L12.4,0.5 L20,2.7 L20,11.4 L25.1,13.7 L25.1,22.4 L17.7,27.3 L0.54,16 Z" fill="url(#sb)"/><path d="M5.7,2.7 L12.4,0.5 L20,2.7 L11.8,4.8 Z" fill="#f1f6f9"/><path d="M11.8,4.8 L20,2.7 L20,11.4 L11.8,14 Z" fill="url(#sw)"/><path d="M11.8,14 L20,11.4 L25.1,13.7 L17.7,17.7 Z" fill="#8fc8e6"/><path d="M17.7,17.7 L25.1,13.7 L25.1,22.4 L17.7,27.3 Z" fill="#3f8cbc"/><path d="M0.54,8.97 L5.7,6.8 L5.7,11 Z" fill="#a4d2ea"/></g><g transform="translate(55.9,11.5)" stroke="#103c58" stroke-width="1" stroke-linejoin="round"><path d="M0.2,3.5 L17.4,0.5 L22,2.5 L22,21.2 L4.2,26.3 L0.2,22.1Z" fill="#3c8aba"/><path d="M0.2,3.5 L4.2,5.9 L4.2,26.3 L0.2,22.1Z" fill="url(#sw)"/><path d="M0.2,3.5 L17.4,0.5 L22,2.5 L4.2,5.9Z" fill="#f8fafb"/><path d="M4.2,5.9 L22,2.5 L22,21.2 L4.2,26.3Z" fill="url(#sb)"/><path d="M7.5,9.6 L18.8,7.5 L18.8,17.3 L7.5,21.2Z" fill="#3f8cbc"/><path d="M7.5,21.2 L8.4,17.9 L15.2,16 L18.8,17.3Z" fill="#8fd0ee" stroke-width="0.7"/><path d="M8.4,10 L15.2,8.6 L15.2,16 L8.4,17.9Z" fill="#fbfcfd" stroke-width="0.7"/></g><g transform="translate(97.7,11.5)" stroke="#103c58" stroke-width="1" stroke-linejoin="round"><path d="M0.2,3.5 L17.4,0.5 L22,2.5 L22,21.2 L4.2,26.3 L0.2,22.1Z" fill="#3c8aba"/><path d="M0.2,3.5 L4.2,5.9 L4.2,26.3 L0.2,22.1Z" fill="url(#sb2)"/><path d="M0.2,3.5 L17.4,0.5 L22,2.5 L4.2,5.9Z" fill="#7dbbdc"/><path d="M4.2,5.9 L22,2.5 L22,21.2 L4.2,26.3Z" fill="url(#sb)"/><path d="M7.6,9.4 L19,7.3 L19,17.2 L7.6,21.2Z" fill="#f4f6f7"/><path d="M15.4,8.3 L19,7.3 L19,17.2 L15.4,16Z" fill="#d9dde0" stroke-width="0.7"/><path d="M8.3,9.8 L15.4,8.3 L15.4,16 L8.3,18.2Z" fill="#ffffff" stroke-width="0.7"/></g><g transform="translate(145.13,10.9)" stroke="#103c58" stroke-width="1" stroke-linejoin="round"><path d="M0,2.78 L5.6,0.43 L16.4,5.6 L16.4,25 L11.3,27.6 L0,21.8Z" fill="url(#sw)"/><path d="M0,2.78 L5.6,0.43 L16.4,5.6 L11.3,7.7Z" fill="#fdfdfd"/><path d="M11.3,7.7 L16.4,5.6 L16.4,25 L11.3,27.6Z" fill="url(#sw)"/><path d="M0,2.78 L11.3,7.7 L11.3,27.6 L0,21.8Z" fill="#eef1f3"/></g><g transform="translate(138.9,10.9)" stroke="#103c58" stroke-width="1" stroke-linejoin="round"><path d="M2.25,15 H11.4 V24.8 H2.25Z" fill="#4d96c2"/><ellipse cx="2.25" cy="19.9" rx="2.1" ry="4.9" fill="#e6eef3"/><path d="M4.4,8.4 H12 Q14.8,9 14.8,12.9 Q14.8,16.8 12,17.4 H4.4Z" fill="url(#sb)"/><ellipse cx="4.4" cy="12.9" rx="1.9" ry="4.5" fill="#e9f0f5"/></g><g transform="translate(190.4,10.9)" stroke="#103c58" stroke-width="1" stroke-linejoin="round"><path d="M0,2.78 L5.6,0.43 L16.4,5.6 L16.4,25 L11.3,27.6 L0,21.8Z" fill="url(#sw)"/><path d="M0,2.78 L5.6,0.43 L16.4,5.6 L11.3,7.7Z" fill="#fdfdfd"/><path d="M11.3,7.7 L16.4,5.6 L16.4,25 L11.3,27.6Z" fill="url(#sw)"/><path d="M0,2.78 L11.3,7.7 L11.3,27.6 L0,21.8Z" fill="#eef1f3"/></g><g transform="translate(179.5,10.9)" stroke="#103c58" stroke-width="1" stroke-linejoin="round"><path d="M10,8.2 H15.4 A4,8.4 0 0 1 15.4,24.6 H10Z" fill="url(#sb)"/><ellipse cx="10" cy="16.5" rx="4.2" ry="8.3" fill="#e4eef4"/><path d="M1.5,12.9 H8.6 Q10,17.3 8.6,21.7 H1.5Z" fill="#4f98c4"/><ellipse cx="1.6" cy="17.3" rx="1.1" ry="4.4" fill="#dfeaf1"/></g><g transform="translate(232.4,10.9)" stroke="#103c58" stroke-width="1" stroke-linejoin="round"><path d="M0,2.78 L5.6,0.43 L16.4,5.6 L16.4,25 L11.3,27.6 L0,21.8Z" fill="url(#sw)"/><path d="M0,2.78 L5.6,0.43 L16.4,5.6 L11.3,7.7Z" fill="#fdfdfd"/><path d="M11.3,7.7 L16.4,5.6 L16.4,25 L11.3,27.6Z" fill="url(#sw)"/><path d="M0,2.78 L11.3,7.7 L11.3,27.6 L0,21.8Z" fill="#eef1f3"/></g><g transform="translate(220.7,10.9)" stroke="#103c58" stroke-width="1" stroke-linejoin="round"><path d="M0.66,11 L13.8,7.7 L18.95,9.6 L18.95,19.4 L4.9,23.6 L0.66,20.4Z" fill="#5aa4cc"/><path d="M0.66,11 L13.8,7.7 L18.95,9.6 L4.9,13.8Z" fill="#9ed6ef"/><path d="M0.66,11 L4.9,13.8 L4.9,23.6 L0.66,20.4Z" fill="#3a86b4"/></g><rect x="266.1" y="13" width="23.5" height="23.8" rx="3.6" fill="url(#sr)" stroke="#a8140a" stroke-width="0.8"/><path d="M272.1,19.2 l11.6,11.8 M283.7,19.2 l-11.6,11.8" stroke="#fff" stroke-width="4.2"/></svg>
<div class="b" style="left:1691px;top:506.5px;width:274px;height:28.5px;background:#f9f9f9;border:1px solid #e2e2e2;box-shadow:2px 2px 3px rgba(0,0,0,0.45);border-radius:2px"></div>
<span class="t" style="left:1696.80px;top:511.99px;font-size:17.5px;letter-spacing:-0.003px;color:#5a5a5a;">All outer and inner loops, 2 Faces</span>
<svg class="abs" style="left:285px;top:1155px;" width="100" height="90" viewBox="0 0 100 90"><path d="M47,28 L53.2,40.8 L50,40.8 L50,72 L44,72 L44,40.8 L40.8,40.8 Z" fill="#0e6716"/><path d="M16.2,71.7 L22.6,66.3 L26.6,66.3 L30.4,69 L48.4,69 L48.4,74.4 L30.4,74.4 L25.6,77.8 Z" fill="#0b0fb6"/><path d="M77.8,71.7 L71.4,66.3 L67.4,66.3 L64,69 L48.4,69 L48.4,74.4 L64,74.4 L68.4,77.8 Z" fill="#c4100c"/><path d="M16.2,71.7 L25.6,77.8 L22,77.8 Z" fill="#0b0fb6"/><path d="M77.8,71.7 L68.4,77.8 L72,77.8 Z" fill="#c4100c"/><circle cx="52.6" cy="70.6" r="1.5" fill="#f7e0d8"/><circle cx="69.6" cy="69.6" r="1.1" fill="#e86a5a"/><text x="48.5" y="18.9" font-family="Liberation Sans, sans-serif" font-size="12" text-anchor="middle" fill="#1c6c2a">Y</text><text x="11.2" y="71.8" font-family="Liberation Sans, sans-serif" font-size="12" text-anchor="middle" fill="#2424cc" font-style="italic">Z</text><text x="85.6" y="72" font-family="Liberation Sans, sans-serif" font-size="12" text-anchor="middle" fill="#e2525e">X</text></svg>
<div class="b" style="left:0px;top:1302px;width:270px;height:3px;background:#fcfcfc"></div>
<div class="b" style="left:0px;top:1304px;width:268px;height:1px;background:#b8b8b8"></div>
<div class="b" style="left:0px;top:1305px;width:2559px;height:25px;background:#f5f5f5"></div>
<div class="b" style="left:358px;top:1305px;width:2199px;height:1px;background:#8a8a8a"></div>
<div class="b" style="left:2556px;top:1305px;width:1px;height:25px;background:#9a9a9a"></div>
<div class="b" style="left:2px;top:1305px;width:96px;height:25px;background:#9c9fb6;border-top:1px solid #777"></div>
<svg class="abs" style="left:2px;top:1306px;" width="97" height="24" viewBox="0 0 97 24"><rect x="0.5" y="0.5" width="23" height="24" fill="#9c9fb6" stroke="#8a8da6" stroke-width="1"/><rect x="24.5" y="0.5" width="23" height="24" fill="#9c9fb6" stroke="#8a8da6" stroke-width="1"/><rect x="48.5" y="0.5" width="23" height="24" fill="#9c9fb6" stroke="#8a8da6" stroke-width="1"/><rect x="72.5" y="0.5" width="23" height="24" fill="#9c9fb6" stroke="#8a8da6" stroke-width="1"/><path d="M8,5.6 v13 M16.6,5.6 l-7,6.5 l7,6.5z" fill="#81849e" stroke="#81849e" stroke-width="1.6"/><path d="M40.6,5.6 l-7,6.5 l7,6.5z" fill="#81849e"/><path d="M56.4,5.6 l7,6.5 l-7,6.5z" fill="#81849e"/><path d="M88.6,5.6 v13 M80,5.6 l7,6.5 l-7,6.5z" fill="#81849e" stroke="#81849e" stroke-width="1.6"/></svg>
<div class="b" style="left:98px;top:1305px;width:88px;height:25px;background:#f8f8f8"></div>
<div class="b" style="left:186px;top:1305px;width:172px;height:25px;background:#d1d1d1;border:1px solid #9a9a9a;border-bottom:none"></div>
<span class="t" style="left:117.80px;top:1308.36px;font-size:18px;letter-spacing:0.925px;color:#000;font-weight:bold;">Model</span>
<span class="t" style="left:203.80px;top:1309.21px;font-size:17px;letter-spacing:1.000px;color:#222;">Motion Study 1</span>
</body></html>
